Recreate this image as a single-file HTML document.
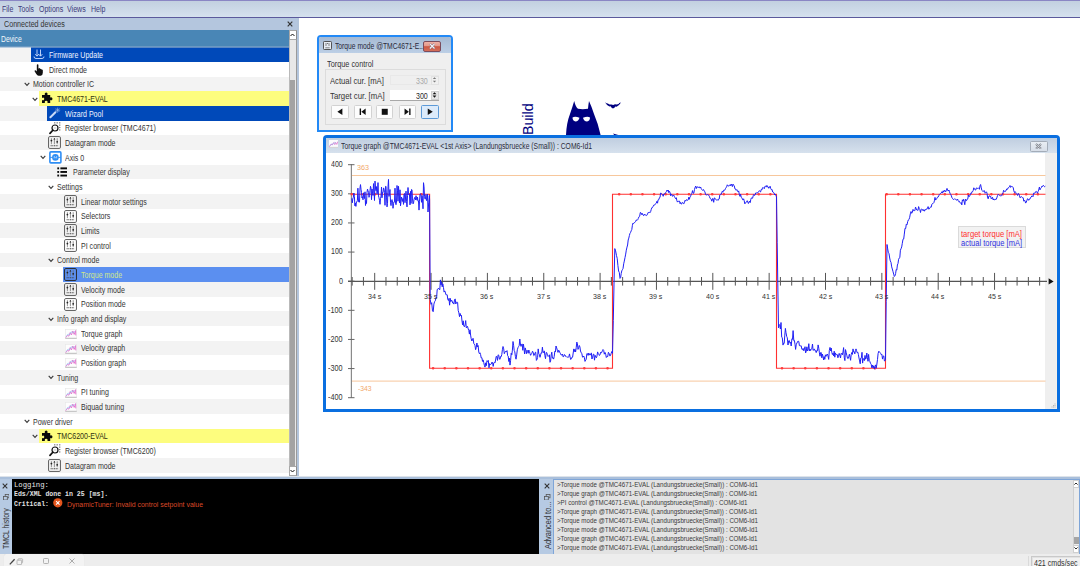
<!DOCTYPE html><html><head><meta charset="utf-8"><style>html,body{margin:0;padding:0;width:1080px;height:566px;overflow:hidden;background:#fff;position:relative;font-family:"Liberation Sans",sans-serif}</style></head><body><div style="position:absolute;left:0.00px;top:0.00px;width:1080.00px;height:18.00px;background:linear-gradient(#c1cfdf,#d6e2ef);"></div><div style="position:absolute;left:0.00px;top:0.00px;width:1080.00px;height:1.00px;background:#8a86c4;"></div><div style="position:absolute;left:0.00px;top:17.00px;width:1080.00px;height:1.00px;background:#5b5a9c;"></div><div style="position:absolute;left:1.70px;top:4.60px;font-family:'Liberation Sans', sans-serif;font-size:8.5px;line-height:8.5px;font-weight:normal;color:#3d3a7a;white-space:pre;transform:scaleX(0.8246);transform-origin:0 0;">File</div><div style="position:absolute;left:18.10px;top:4.60px;font-family:'Liberation Sans', sans-serif;font-size:8.5px;line-height:8.5px;font-weight:normal;color:#3d3a7a;white-space:pre;transform:scaleX(0.8013);transform-origin:0 0;">Tools</div><div style="position:absolute;left:38.50px;top:4.60px;font-family:'Liberation Sans', sans-serif;font-size:8.5px;line-height:8.5px;font-weight:normal;color:#3d3a7a;white-space:pre;transform:scaleX(0.8260);transform-origin:0 0;">Options</div><div style="position:absolute;left:67.20px;top:4.60px;font-family:'Liberation Sans', sans-serif;font-size:8.5px;line-height:8.5px;font-weight:normal;color:#3d3a7a;white-space:pre;transform:scaleX(0.8300);transform-origin:0 0;">Views</div><div style="position:absolute;left:90.50px;top:4.60px;font-family:'Liberation Sans', sans-serif;font-size:8.5px;line-height:8.5px;font-weight:normal;color:#3d3a7a;white-space:pre;transform:scaleX(0.8293);transform-origin:0 0;">Help</div><div style="position:absolute;left:0.00px;top:18.00px;width:297.00px;height:12.00px;background:#b4c6de;"></div><div style="position:absolute;left:4.00px;top:19.80px;font-family:'Liberation Sans', sans-serif;font-size:8.5px;line-height:8.5px;font-weight:normal;color:#333;white-space:pre;transform:scaleX(0.8410);transform-origin:0 0;">Connected devices</div><svg style="position:absolute;left:287.2px;top:20.5px" width="6" height="6" viewBox="0 0 6 6"><path d="M0.7 0.7L5.3 5.3M5.3 0.7L0.7 5.3" stroke="#333" stroke-width="1.2"/></svg><div style="position:absolute;left:0.00px;top:30.00px;width:288.50px;height:16.50px;background:#4986b6;"></div><div style="position:absolute;left:1.40px;top:34.80px;font-family:'Liberation Sans', sans-serif;font-size:8.5px;line-height:8.5px;font-weight:normal;color:#f2f6fa;white-space:pre;transform:scaleX(0.8005);transform-origin:0 0;">Device</div><div style="position:absolute;left:0.00px;top:47.20px;width:288.50px;height:14.68px;background:#f3f3f3;"></div><div style="position:absolute;left:31.00px;top:47.50px;width:257.50px;height:14.37px;background:#0049b9;"></div><svg style="position:absolute;left:33.0px;top:49.400000000000006px" width="12" height="11" viewBox="0 0 12 11"><path d="M4 0.5V7M2.2 5.2L4 7.2L5.8 5.2M7.5 0.5V7M5.7 5.2L7.5 7.2L9.3 5.2M1 7.5Q1 9.5 3 9.5H9Q11 9.5 11 7.5" stroke="#cfe0ff" stroke-width="0.9" fill="none"/></svg><div style="position:absolute;left:48.60px;top:50.92px;font-family:'Liberation Sans', sans-serif;font-size:8.6px;line-height:8.6px;font-weight:normal;color:#eef3ff;white-space:pre;transform:scaleX(0.8200);transform-origin:0 0;">Firmware Update</div><div style="position:absolute;left:0.00px;top:61.87px;width:288.50px;height:14.68px;background:#ffffff;"></div><svg style="position:absolute;left:33.6px;top:64.17px" width="10.6" height="12.4" viewBox="0 0 12 14"><path d="M3.2 1.2Q3.2 0.3 4.1 0.3Q5 0.3 5 1.2V6.2L5.3 4.9Q6.2 4.3 6.8 5.1L7 5.6Q7.9 5.1 8.5 5.9L8.6 6.4Q9.6 6.1 10 7V9.8Q10 12.6 7.6 13.4H5.2Q3.6 13.2 2.6 11.4L0.8 8.4Q0.3 7.4 1.2 7.1Q1.9 6.9 2.5 7.7L3.2 8.6Z" fill="#111"/></svg><div style="position:absolute;left:48.60px;top:65.59px;font-family:'Liberation Sans', sans-serif;font-size:8.6px;line-height:8.6px;font-weight:normal;color:#353535;white-space:pre;transform:scaleX(0.8200);transform-origin:0 0;">Direct mode</div><div style="position:absolute;left:0.00px;top:76.54px;width:288.50px;height:14.68px;background:#f3f3f3;"></div><svg style="position:absolute;left:24px;top:81.94px" width="6" height="5" viewBox="0 0 6 5"><path d="M0.7 0.9L3 3.3L5.3 0.9" stroke="#3a3a3a" stroke-width="1.15" fill="none"/></svg><div style="position:absolute;left:32.80px;top:80.26px;font-family:'Liberation Sans', sans-serif;font-size:8.6px;line-height:8.6px;font-weight:normal;color:#353535;white-space:pre;transform:scaleX(0.8200);transform-origin:0 0;">Motion controller IC</div><div style="position:absolute;left:0.00px;top:91.21px;width:288.50px;height:14.68px;background:#ffffff;"></div><div style="position:absolute;left:39.00px;top:91.21px;width:249.50px;height:14.67px;background:#fdfd7e;"></div><svg style="position:absolute;left:32px;top:96.61px" width="6" height="5" viewBox="0 0 6 5"><path d="M0.7 0.9L3 3.3L5.3 0.9" stroke="#3a3a3a" stroke-width="1.15" fill="none"/></svg><svg style="position:absolute;left:40.5px;top:92.41000000000001px" width="12" height="12" viewBox="0 0 12 12"><path d="M1 3H4Q3.2 1.8 4.1 0.9Q5.2 0.1 6.2 0.9Q7 1.8 6.3 3H9.2V5.6Q10.3 5 11.1 5.8Q11.9 6.9 11.1 7.9Q10.3 8.6 9.2 8V11H6.4Q7.1 9.9 6.2 9.1Q5.2 8.3 4.1 9.1Q3.3 9.9 4 11H1V8Q2.2 8.7 3 7.8Q3.6 6.9 3 5.9Q2.2 5.1 1 5.9Z" fill="#0a0a0a"/></svg><div style="position:absolute;left:56.60px;top:94.93px;font-family:'Liberation Sans', sans-serif;font-size:8.6px;line-height:8.6px;font-weight:normal;color:#303010;white-space:pre;transform:scaleX(0.8200);transform-origin:0 0;">TMC4671-EVAL</div><div style="position:absolute;left:0.00px;top:105.88px;width:288.50px;height:14.68px;background:#f3f3f3;"></div><div style="position:absolute;left:47.00px;top:106.18px;width:241.50px;height:14.37px;background:#0049b9;"></div><svg style="position:absolute;left:48.5px;top:107.08px" width="12" height="12" viewBox="0 0 12 12"><path d="M1.4 10.2L6.4 5.2" stroke="#c9daf8" stroke-width="2" stroke-linecap="round"/><path d="M8.6 0.6V5.8M6 3.2H11.2M6.8 1.4L10.4 5M10.4 1.4L6.8 5" stroke="#a9c2ef" stroke-width="0.55"/></svg><div style="position:absolute;left:64.60px;top:109.60px;font-family:'Liberation Sans', sans-serif;font-size:8.6px;line-height:8.6px;font-weight:normal;color:#eef3ff;white-space:pre;transform:scaleX(0.8200);transform-origin:0 0;">Wizard Pool</div><div style="position:absolute;left:0.00px;top:120.55px;width:288.50px;height:14.68px;background:#ffffff;"></div><svg style="position:absolute;left:48.5px;top:121.75px" width="14" height="13" viewBox="0 0 14 13"><g fill="#777"><rect x="5" y="0.3" width="1.4" height="1.1"/><rect x="7.5" y="0.3" width="1.4" height="1.1"/><rect x="10" y="0.3" width="1.4" height="1.1"/><rect x="10" y="2.6" width="1.4" height="1.1"/><rect x="10" y="5" width="1.4" height="1.1"/><rect x="10" y="7.4" width="1.4" height="1.1"/></g><circle cx="6" cy="6" r="3" stroke="#111" stroke-width="1.2" fill="#fff"/><path d="M3.8 8.2L1 11.4" stroke="#111" stroke-width="1.7" stroke-linecap="round"/><path d="M4.6 6H7.4" stroke="#aaa" stroke-width="0.7"/></svg><div style="position:absolute;left:64.60px;top:124.27px;font-family:'Liberation Sans', sans-serif;font-size:8.6px;line-height:8.6px;font-weight:normal;color:#353535;white-space:pre;transform:scaleX(0.8200);transform-origin:0 0;">Register browser (TMC4671)</div><div style="position:absolute;left:0.00px;top:135.22px;width:288.50px;height:14.68px;background:#f3f3f3;"></div><svg style="position:absolute;left:47.9px;top:136.42px" width="13" height="13" viewBox="0 0 13 13"><rect x="0.55" y="0.55" width="11.9" height="11.9" rx="1.3" stroke="#5e5e5e" stroke-width="1.0" fill="none"/><path d="M3.4 2.2V8.2M6.4 2V8.2M9.2 2.2V8.2" stroke="#666" stroke-width="0.7"/><circle cx="3.4" cy="4.6" r="0.9" fill="#222"/><path d="M5.4 3.4L6.4 1.9L7.4 3.4Z" fill="#222"/><circle cx="9.2" cy="5.8" r="0.9" fill="#222"/><path d="M2.6 9.7H10.1" stroke="#444" stroke-width="1.1" stroke-dasharray="1.1 0.6"/></svg><div style="position:absolute;left:64.60px;top:138.94px;font-family:'Liberation Sans', sans-serif;font-size:8.6px;line-height:8.6px;font-weight:normal;color:#353535;white-space:pre;transform:scaleX(0.8200);transform-origin:0 0;">Datagram mode</div><div style="position:absolute;left:0.00px;top:149.89px;width:288.50px;height:14.68px;background:#ffffff;"></div><svg style="position:absolute;left:40px;top:155.29px" width="6" height="5" viewBox="0 0 6 5"><path d="M0.7 0.9L3 3.3L5.3 0.9" stroke="#3a3a3a" stroke-width="1.15" fill="none"/></svg><svg style="position:absolute;left:48.5px;top:151.08999999999997px" width="13" height="13" viewBox="0 0 13 13"><rect x="0.9" y="0.9" width="11" height="11" rx="1" stroke="#2f8ef4" stroke-width="1.6" fill="#fff"/><path d="M1 6.4H12" stroke="#2f8ef4" stroke-width="0.9"/><circle cx="6.4" cy="6.4" r="3.3" fill="#2f8ef4"/><path d="M5.2 7.4V5.5L6.4 6.7L7.6 5.5V7.4" stroke="#e6f1ff" stroke-width="0.6" fill="none"/></svg><div style="position:absolute;left:64.60px;top:153.61px;font-family:'Liberation Sans', sans-serif;font-size:8.6px;line-height:8.6px;font-weight:normal;color:#353535;white-space:pre;transform:scaleX(0.8200);transform-origin:0 0;">Axis 0</div><div style="position:absolute;left:0.00px;top:164.56px;width:288.50px;height:14.68px;background:#f3f3f3;"></div><svg style="position:absolute;left:57.4px;top:166.76px" width="11" height="11" viewBox="0 0 11 11"><g fill="#0a0a0a"><rect x="0.3" y="0.4" width="1.8" height="1.9"/><rect x="3.4" y="0.4" width="6.6" height="1.9"/><rect x="0.3" y="4" width="1.8" height="1.9"/><rect x="3.4" y="4" width="6.6" height="1.9"/><rect x="0.3" y="7.6" width="1.8" height="1.9"/><rect x="3.4" y="7.6" width="6.6" height="1.9"/></g></svg><div style="position:absolute;left:72.60px;top:168.28px;font-family:'Liberation Sans', sans-serif;font-size:8.6px;line-height:8.6px;font-weight:normal;color:#353535;white-space:pre;transform:scaleX(0.8200);transform-origin:0 0;">Parameter display</div><div style="position:absolute;left:0.00px;top:179.23px;width:288.50px;height:14.68px;background:#ffffff;"></div><svg style="position:absolute;left:48px;top:184.63px" width="6" height="5" viewBox="0 0 6 5"><path d="M0.7 0.9L3 3.3L5.3 0.9" stroke="#3a3a3a" stroke-width="1.15" fill="none"/></svg><div style="position:absolute;left:56.80px;top:182.95px;font-family:'Liberation Sans', sans-serif;font-size:8.6px;line-height:8.6px;font-weight:normal;color:#353535;white-space:pre;transform:scaleX(0.8200);transform-origin:0 0;">Settings</div><div style="position:absolute;left:0.00px;top:193.90px;width:288.50px;height:14.68px;background:#f3f3f3;"></div><svg style="position:absolute;left:63.9px;top:195.09999999999997px" width="13" height="13" viewBox="0 0 13 13"><rect x="0.55" y="0.55" width="11.9" height="11.9" rx="1.3" stroke="#5e5e5e" stroke-width="1.0" fill="none"/><path d="M3.4 2.2V8.2M6.4 2V8.2M9.2 2.2V8.2" stroke="#666" stroke-width="0.7"/><circle cx="3.4" cy="4.6" r="0.9" fill="#222"/><path d="M5.4 3.4L6.4 1.9L7.4 3.4Z" fill="#222"/><circle cx="9.2" cy="5.8" r="0.9" fill="#222"/><path d="M2.6 9.7H10.1" stroke="#444" stroke-width="1.1" stroke-dasharray="1.1 0.6"/></svg><div style="position:absolute;left:80.60px;top:197.62px;font-family:'Liberation Sans', sans-serif;font-size:8.6px;line-height:8.6px;font-weight:normal;color:#353535;white-space:pre;transform:scaleX(0.8200);transform-origin:0 0;">Linear motor settings</div><div style="position:absolute;left:0.00px;top:208.57px;width:288.50px;height:14.68px;background:#ffffff;"></div><svg style="position:absolute;left:63.9px;top:209.76999999999998px" width="13" height="13" viewBox="0 0 13 13"><rect x="0.55" y="0.55" width="11.9" height="11.9" rx="1.3" stroke="#5e5e5e" stroke-width="1.0" fill="none"/><path d="M3.4 2.2V8.2M6.4 2V8.2M9.2 2.2V8.2" stroke="#666" stroke-width="0.7"/><circle cx="3.4" cy="4.6" r="0.9" fill="#222"/><path d="M5.4 3.4L6.4 1.9L7.4 3.4Z" fill="#222"/><circle cx="9.2" cy="5.8" r="0.9" fill="#222"/><path d="M2.6 9.7H10.1" stroke="#444" stroke-width="1.1" stroke-dasharray="1.1 0.6"/></svg><div style="position:absolute;left:80.60px;top:212.29px;font-family:'Liberation Sans', sans-serif;font-size:8.6px;line-height:8.6px;font-weight:normal;color:#353535;white-space:pre;transform:scaleX(0.8200);transform-origin:0 0;">Selectors</div><div style="position:absolute;left:0.00px;top:223.24px;width:288.50px;height:14.68px;background:#f3f3f3;"></div><svg style="position:absolute;left:63.9px;top:224.44px" width="13" height="13" viewBox="0 0 13 13"><rect x="0.55" y="0.55" width="11.9" height="11.9" rx="1.3" stroke="#5e5e5e" stroke-width="1.0" fill="none"/><path d="M3.4 2.2V8.2M6.4 2V8.2M9.2 2.2V8.2" stroke="#666" stroke-width="0.7"/><circle cx="3.4" cy="4.6" r="0.9" fill="#222"/><path d="M5.4 3.4L6.4 1.9L7.4 3.4Z" fill="#222"/><circle cx="9.2" cy="5.8" r="0.9" fill="#222"/><path d="M2.6 9.7H10.1" stroke="#444" stroke-width="1.1" stroke-dasharray="1.1 0.6"/></svg><div style="position:absolute;left:80.60px;top:226.96px;font-family:'Liberation Sans', sans-serif;font-size:8.6px;line-height:8.6px;font-weight:normal;color:#353535;white-space:pre;transform:scaleX(0.8200);transform-origin:0 0;">Limits</div><div style="position:absolute;left:0.00px;top:237.91px;width:288.50px;height:14.68px;background:#ffffff;"></div><svg style="position:absolute;left:63.9px;top:239.11px" width="13" height="13" viewBox="0 0 13 13"><rect x="0.55" y="0.55" width="11.9" height="11.9" rx="1.3" stroke="#5e5e5e" stroke-width="1.0" fill="none"/><path d="M3.4 2.2V8.2M6.4 2V8.2M9.2 2.2V8.2" stroke="#666" stroke-width="0.7"/><circle cx="3.4" cy="4.6" r="0.9" fill="#222"/><path d="M5.4 3.4L6.4 1.9L7.4 3.4Z" fill="#222"/><circle cx="9.2" cy="5.8" r="0.9" fill="#222"/><path d="M2.6 9.7H10.1" stroke="#444" stroke-width="1.1" stroke-dasharray="1.1 0.6"/></svg><div style="position:absolute;left:80.60px;top:241.63px;font-family:'Liberation Sans', sans-serif;font-size:8.6px;line-height:8.6px;font-weight:normal;color:#353535;white-space:pre;transform:scaleX(0.8200);transform-origin:0 0;">PI control</div><div style="position:absolute;left:0.00px;top:252.58px;width:288.50px;height:14.68px;background:#f3f3f3;"></div><svg style="position:absolute;left:48px;top:257.98px" width="6" height="5" viewBox="0 0 6 5"><path d="M0.7 0.9L3 3.3L5.3 0.9" stroke="#3a3a3a" stroke-width="1.15" fill="none"/></svg><div style="position:absolute;left:56.80px;top:256.30px;font-family:'Liberation Sans', sans-serif;font-size:8.6px;line-height:8.6px;font-weight:normal;color:#353535;white-space:pre;transform:scaleX(0.8200);transform-origin:0 0;">Control mode</div><div style="position:absolute;left:0.00px;top:267.25px;width:288.50px;height:14.68px;background:#ffffff;"></div><div style="position:absolute;left:62.50px;top:267.25px;width:226.00px;height:14.67px;background:#5b8ff0;"></div><svg style="position:absolute;left:63.9px;top:268.45px" width="13" height="13" viewBox="0 0 13 13"><rect x="0.55" y="0.55" width="11.9" height="11.9" rx="1.3" stroke="#2a2a2a" stroke-width="1.0" fill="none"/><path d="M3.4 2.2V8.2M6.4 2V8.2M9.2 2.2V8.2" stroke="#666" stroke-width="0.7"/><circle cx="3.4" cy="4.6" r="0.9" fill="#222"/><path d="M5.4 3.4L6.4 1.9L7.4 3.4Z" fill="#222"/><circle cx="9.2" cy="5.8" r="0.9" fill="#222"/><path d="M2.6 9.7H10.1" stroke="#444" stroke-width="1.1" stroke-dasharray="1.1 0.6"/></svg><div style="position:absolute;left:80.60px;top:270.97px;font-family:'Liberation Sans', sans-serif;font-size:8.6px;line-height:8.6px;font-weight:normal;color:#cfe68a;white-space:pre;transform:scaleX(0.8200);transform-origin:0 0;">Torque mode</div><div style="position:absolute;left:0.00px;top:281.92px;width:288.50px;height:14.68px;background:#f3f3f3;"></div><svg style="position:absolute;left:63.9px;top:283.12px" width="13" height="13" viewBox="0 0 13 13"><rect x="0.55" y="0.55" width="11.9" height="11.9" rx="1.3" stroke="#5e5e5e" stroke-width="1.0" fill="none"/><path d="M3.4 2.2V8.2M6.4 2V8.2M9.2 2.2V8.2" stroke="#666" stroke-width="0.7"/><circle cx="3.4" cy="4.6" r="0.9" fill="#222"/><path d="M5.4 3.4L6.4 1.9L7.4 3.4Z" fill="#222"/><circle cx="9.2" cy="5.8" r="0.9" fill="#222"/><path d="M2.6 9.7H10.1" stroke="#444" stroke-width="1.1" stroke-dasharray="1.1 0.6"/></svg><div style="position:absolute;left:80.60px;top:285.64px;font-family:'Liberation Sans', sans-serif;font-size:8.6px;line-height:8.6px;font-weight:normal;color:#353535;white-space:pre;transform:scaleX(0.8200);transform-origin:0 0;">Velocity mode</div><div style="position:absolute;left:0.00px;top:296.59px;width:288.50px;height:14.68px;background:#ffffff;"></div><svg style="position:absolute;left:63.9px;top:297.78999999999996px" width="13" height="13" viewBox="0 0 13 13"><rect x="0.55" y="0.55" width="11.9" height="11.9" rx="1.3" stroke="#5e5e5e" stroke-width="1.0" fill="none"/><path d="M3.4 2.2V8.2M6.4 2V8.2M9.2 2.2V8.2" stroke="#666" stroke-width="0.7"/><circle cx="3.4" cy="4.6" r="0.9" fill="#222"/><path d="M5.4 3.4L6.4 1.9L7.4 3.4Z" fill="#222"/><circle cx="9.2" cy="5.8" r="0.9" fill="#222"/><path d="M2.6 9.7H10.1" stroke="#444" stroke-width="1.1" stroke-dasharray="1.1 0.6"/></svg><div style="position:absolute;left:80.60px;top:300.31px;font-family:'Liberation Sans', sans-serif;font-size:8.6px;line-height:8.6px;font-weight:normal;color:#353535;white-space:pre;transform:scaleX(0.8200);transform-origin:0 0;">Position mode</div><div style="position:absolute;left:0.00px;top:311.26px;width:288.50px;height:14.68px;background:#f3f3f3;"></div><svg style="position:absolute;left:48px;top:316.66px" width="6" height="5" viewBox="0 0 6 5"><path d="M0.7 0.9L3 3.3L5.3 0.9" stroke="#3a3a3a" stroke-width="1.15" fill="none"/></svg><div style="position:absolute;left:56.80px;top:314.98px;font-family:'Liberation Sans', sans-serif;font-size:8.6px;line-height:8.6px;font-weight:normal;color:#353535;white-space:pre;transform:scaleX(0.8200);transform-origin:0 0;">Info graph and display</div><div style="position:absolute;left:0.00px;top:325.93px;width:288.50px;height:14.68px;background:#ffffff;"></div><svg style="position:absolute;left:65px;top:328.93px" width="12" height="10" viewBox="0 0 12 10"><rect x="0.3" y="0.3" width="11.4" height="9.2" fill="#fdfdfd" stroke="#e6e6e6" stroke-width="0.6"/><path d="M0.3 9.3H11.7" stroke="#bdbdbd" stroke-width="1"/><path d="M0.8 8.6L2.6 6.2L3.8 7.2L5.2 3.6L6.4 6L7.8 2L9.2 5.4L10.6 1.6L10.8 6.4" stroke="#e67ad2" stroke-width="1" fill="none"/><path d="M1.2 7.6L3 5L4.6 5.8L6 2.8L8 3.6L9.8 2.4" stroke="#8fc4f2" stroke-width="0.6" fill="none"/></svg><div style="position:absolute;left:80.60px;top:329.65px;font-family:'Liberation Sans', sans-serif;font-size:8.6px;line-height:8.6px;font-weight:normal;color:#353535;white-space:pre;transform:scaleX(0.8200);transform-origin:0 0;">Torque graph</div><div style="position:absolute;left:0.00px;top:340.60px;width:288.50px;height:14.68px;background:#f3f3f3;"></div><svg style="position:absolute;left:65px;top:343.59999999999997px" width="12" height="10" viewBox="0 0 12 10"><rect x="0.3" y="0.3" width="11.4" height="9.2" fill="#fdfdfd" stroke="#e6e6e6" stroke-width="0.6"/><path d="M0.3 9.3H11.7" stroke="#bdbdbd" stroke-width="1"/><path d="M0.8 8.6L2.6 6.2L3.8 7.2L5.2 3.6L6.4 6L7.8 2L9.2 5.4L10.6 1.6L10.8 6.4" stroke="#e67ad2" stroke-width="1" fill="none"/><path d="M1.2 7.6L3 5L4.6 5.8L6 2.8L8 3.6L9.8 2.4" stroke="#8fc4f2" stroke-width="0.6" fill="none"/></svg><div style="position:absolute;left:80.60px;top:344.32px;font-family:'Liberation Sans', sans-serif;font-size:8.6px;line-height:8.6px;font-weight:normal;color:#353535;white-space:pre;transform:scaleX(0.8200);transform-origin:0 0;">Velocity graph</div><div style="position:absolute;left:0.00px;top:355.27px;width:288.50px;height:14.68px;background:#ffffff;"></div><svg style="position:absolute;left:65px;top:358.27px" width="12" height="10" viewBox="0 0 12 10"><rect x="0.3" y="0.3" width="11.4" height="9.2" fill="#fdfdfd" stroke="#e6e6e6" stroke-width="0.6"/><path d="M0.3 9.3H11.7" stroke="#bdbdbd" stroke-width="1"/><path d="M0.8 8.6L2.6 6.2L3.8 7.2L5.2 3.6L6.4 6L7.8 2L9.2 5.4L10.6 1.6L10.8 6.4" stroke="#e67ad2" stroke-width="1" fill="none"/><path d="M1.2 7.6L3 5L4.6 5.8L6 2.8L8 3.6L9.8 2.4" stroke="#8fc4f2" stroke-width="0.6" fill="none"/></svg><div style="position:absolute;left:80.60px;top:358.99px;font-family:'Liberation Sans', sans-serif;font-size:8.6px;line-height:8.6px;font-weight:normal;color:#353535;white-space:pre;transform:scaleX(0.8200);transform-origin:0 0;">Position graph</div><div style="position:absolute;left:0.00px;top:369.94px;width:288.50px;height:14.68px;background:#f3f3f3;"></div><svg style="position:absolute;left:48px;top:375.34px" width="6" height="5" viewBox="0 0 6 5"><path d="M0.7 0.9L3 3.3L5.3 0.9" stroke="#3a3a3a" stroke-width="1.15" fill="none"/></svg><div style="position:absolute;left:56.80px;top:373.66px;font-family:'Liberation Sans', sans-serif;font-size:8.6px;line-height:8.6px;font-weight:normal;color:#353535;white-space:pre;transform:scaleX(0.8200);transform-origin:0 0;">Tuning</div><div style="position:absolute;left:0.00px;top:384.61px;width:288.50px;height:14.68px;background:#ffffff;"></div><svg style="position:absolute;left:65px;top:387.61px" width="12" height="10" viewBox="0 0 12 10"><rect x="0.3" y="0.3" width="11.4" height="9.2" fill="#fdfdfd" stroke="#e6e6e6" stroke-width="0.6"/><path d="M0.3 9.3H11.7" stroke="#bdbdbd" stroke-width="1"/><path d="M0.8 8.6L2.6 6.2L3.8 7.2L5.2 3.6L6.4 6L7.8 2L9.2 5.4L10.6 1.6L10.8 6.4" stroke="#e67ad2" stroke-width="1" fill="none"/><path d="M1.2 7.6L3 5L4.6 5.8L6 2.8L8 3.6L9.8 2.4" stroke="#8fc4f2" stroke-width="0.6" fill="none"/></svg><div style="position:absolute;left:80.60px;top:388.33px;font-family:'Liberation Sans', sans-serif;font-size:8.6px;line-height:8.6px;font-weight:normal;color:#353535;white-space:pre;transform:scaleX(0.8200);transform-origin:0 0;">PI tuning</div><div style="position:absolute;left:0.00px;top:399.28px;width:288.50px;height:14.68px;background:#f3f3f3;"></div><svg style="position:absolute;left:65px;top:402.28px" width="12" height="10" viewBox="0 0 12 10"><rect x="0.3" y="0.3" width="11.4" height="9.2" fill="#fdfdfd" stroke="#e6e6e6" stroke-width="0.6"/><path d="M0.3 9.3H11.7" stroke="#bdbdbd" stroke-width="1"/><path d="M0.8 8.6L2.6 6.2L3.8 7.2L5.2 3.6L6.4 6L7.8 2L9.2 5.4L10.6 1.6L10.8 6.4" stroke="#e67ad2" stroke-width="1" fill="none"/><path d="M1.2 7.6L3 5L4.6 5.8L6 2.8L8 3.6L9.8 2.4" stroke="#8fc4f2" stroke-width="0.6" fill="none"/></svg><div style="position:absolute;left:80.60px;top:403.00px;font-family:'Liberation Sans', sans-serif;font-size:8.6px;line-height:8.6px;font-weight:normal;color:#353535;white-space:pre;transform:scaleX(0.8200);transform-origin:0 0;">Biquad tuning</div><div style="position:absolute;left:0.00px;top:413.95px;width:288.50px;height:14.68px;background:#ffffff;"></div><svg style="position:absolute;left:24px;top:419.35px" width="6" height="5" viewBox="0 0 6 5"><path d="M0.7 0.9L3 3.3L5.3 0.9" stroke="#3a3a3a" stroke-width="1.15" fill="none"/></svg><div style="position:absolute;left:32.80px;top:417.67px;font-family:'Liberation Sans', sans-serif;font-size:8.6px;line-height:8.6px;font-weight:normal;color:#353535;white-space:pre;transform:scaleX(0.8200);transform-origin:0 0;">Power driver</div><div style="position:absolute;left:0.00px;top:428.62px;width:288.50px;height:14.68px;background:#f3f3f3;"></div><div style="position:absolute;left:39.00px;top:428.62px;width:249.50px;height:14.67px;background:#fdfd7e;"></div><svg style="position:absolute;left:32px;top:434.02px" width="6" height="5" viewBox="0 0 6 5"><path d="M0.7 0.9L3 3.3L5.3 0.9" stroke="#3a3a3a" stroke-width="1.15" fill="none"/></svg><svg style="position:absolute;left:40.5px;top:429.82px" width="12" height="12" viewBox="0 0 12 12"><path d="M1 3H4Q3.2 1.8 4.1 0.9Q5.2 0.1 6.2 0.9Q7 1.8 6.3 3H9.2V5.6Q10.3 5 11.1 5.8Q11.9 6.9 11.1 7.9Q10.3 8.6 9.2 8V11H6.4Q7.1 9.9 6.2 9.1Q5.2 8.3 4.1 9.1Q3.3 9.9 4 11H1V8Q2.2 8.7 3 7.8Q3.6 6.9 3 5.9Q2.2 5.1 1 5.9Z" fill="#0a0a0a"/></svg><div style="position:absolute;left:56.60px;top:432.34px;font-family:'Liberation Sans', sans-serif;font-size:8.6px;line-height:8.6px;font-weight:normal;color:#303010;white-space:pre;transform:scaleX(0.8200);transform-origin:0 0;">TMC6200-EVAL</div><div style="position:absolute;left:0.00px;top:443.29px;width:288.50px;height:14.68px;background:#ffffff;"></div><svg style="position:absolute;left:48.5px;top:444.48999999999995px" width="14" height="13" viewBox="0 0 14 13"><g fill="#777"><rect x="5" y="0.3" width="1.4" height="1.1"/><rect x="7.5" y="0.3" width="1.4" height="1.1"/><rect x="10" y="0.3" width="1.4" height="1.1"/><rect x="10" y="2.6" width="1.4" height="1.1"/><rect x="10" y="5" width="1.4" height="1.1"/><rect x="10" y="7.4" width="1.4" height="1.1"/></g><circle cx="6" cy="6" r="3" stroke="#111" stroke-width="1.2" fill="#fff"/><path d="M3.8 8.2L1 11.4" stroke="#111" stroke-width="1.7" stroke-linecap="round"/><path d="M4.6 6H7.4" stroke="#aaa" stroke-width="0.7"/></svg><div style="position:absolute;left:64.60px;top:447.01px;font-family:'Liberation Sans', sans-serif;font-size:8.6px;line-height:8.6px;font-weight:normal;color:#353535;white-space:pre;transform:scaleX(0.8200);transform-origin:0 0;">Register browser (TMC6200)</div><div style="position:absolute;left:0.00px;top:457.96px;width:288.50px;height:14.68px;background:#f3f3f3;"></div><svg style="position:absolute;left:47.9px;top:459.15999999999997px" width="13" height="13" viewBox="0 0 13 13"><rect x="0.55" y="0.55" width="11.9" height="11.9" rx="1.3" stroke="#5e5e5e" stroke-width="1.0" fill="none"/><path d="M3.4 2.2V8.2M6.4 2V8.2M9.2 2.2V8.2" stroke="#666" stroke-width="0.7"/><circle cx="3.4" cy="4.6" r="0.9" fill="#222"/><path d="M5.4 3.4L6.4 1.9L7.4 3.4Z" fill="#222"/><circle cx="9.2" cy="5.8" r="0.9" fill="#222"/><path d="M2.6 9.7H10.1" stroke="#444" stroke-width="1.1" stroke-dasharray="1.1 0.6"/></svg><div style="position:absolute;left:64.60px;top:461.68px;font-family:'Liberation Sans', sans-serif;font-size:8.6px;line-height:8.6px;font-weight:normal;color:#353535;white-space:pre;transform:scaleX(0.8200);transform-origin:0 0;">Datagram mode</div><div style="position:absolute;left:0.00px;top:46.00px;width:288.50px;height:1.00px;background:#6a98c1;"></div><div style="position:absolute;left:0.00px;top:47.00px;width:31.00px;height:1.00px;background:#b9cde0;"></div><div style="position:absolute;left:31.00px;top:47.00px;width:257.50px;height:1.00px;background:#5a88c4;"></div><div style="position:absolute;left:288.50px;top:30.00px;width:8.00px;height:446.00px;background:#e8e8e8;border-left:1px solid #b9b9b9;border-right:1px solid #9a9a9a;box-sizing:border-box;"></div><div style="position:absolute;left:288.50px;top:30.30px;width:8.00px;height:9.80px;background:#fff;border:1px solid #a8a8a8;border-right-color:#8c8c8c;box-sizing:border-box;"></div><svg style="position:absolute;left:290.3px;top:33px" width="5" height="4" viewBox="0 0 5 4"><path d="M0.5 3L2.5 1L4.5 3" stroke="#111" stroke-width="1" fill="none"/></svg><div style="position:absolute;left:290.30px;top:80.00px;width:5.00px;height:385.50px;background:#a3a3a3;"></div><div style="position:absolute;left:288.50px;top:466.30px;width:8.00px;height:9.80px;background:#fff;border:1px solid #a8a8a8;border-right-color:#8c8c8c;box-sizing:border-box;"></div><svg style="position:absolute;left:290.3px;top:469px" width="5" height="4" viewBox="0 0 5 4"><path d="M0.5 1L2.5 3L4.5 1" stroke="#111" stroke-width="1" fill="none"/></svg><div style="position:absolute;left:0.00px;top:472.63px;width:288.50px;height:3.37px;background:#fff;"></div><div style="position:absolute;left:296.50px;top:18.00px;width:2.60px;height:458.00px;background:#b3c5dc;"></div><div style="position:absolute;left:299.10px;top:18.00px;width:780.90px;height:458.00px;background:#fff;"></div><div style="position:absolute;left:520.5px;top:134.6px;width:32px;height:14px;transform:rotate(-90deg);transform-origin:0 0;font-family:'Liberation Sans',sans-serif;font-size:14.2px;line-height:14px;color:#000080;white-space:nowrap">Build</div><svg style="position:absolute;left:560px;top:98px" width="70" height="40" viewBox="0 0 70 40"><path d="M6 37Q6.5 25 10 16Q12.5 9 14.2 3.1Q15.8 9.5 18 10.8Q22.5 11.6 28 10.8Q28.4 6.5 29 3Q31.6 8.5 34 16Q38.3 26 40.6 37Z" fill="#000080"/><path d="M12.5 19.5Q15 18 19.5 19.8Q18.5 23.4 15.5 23.4Q12.6 23 12.5 19.5Z" fill="#fff"/><path d="M23 19.7Q27.5 17.8 30 19.4Q30 23 27 23.4Q23.8 23.2 23 19.7Z" fill="#fff"/><path d="M45 4.2Q46.5 7 49.5 8.6L50.6 8.2L51.6 9.8L53 10.6L54.4 9.8L55.4 8.4L56.6 8.8Q59.5 7.2 61 4.6L59.2 4.9L58.6 5.9L56.6 6.4L55 6.2L53.2 7L51.4 6.4L49.6 6.5L47.8 5.5L46.5 5.2Z" fill="#000080"/><path d="M53 35.5L60 37.5L55 38Z" fill="#000080"/></svg><div style="position:absolute;left:317.4px;top:35.2px;width:135.40px;height:97.20px;box-sizing:border-box;border:2.6px solid #2289f6;border-radius:4px 4px 0 0;background:#efefef;overflow:hidden"><div style="position:absolute;left:0;top:0;right:0;height:16.2px;background:linear-gradient(#a6bad3,#bccfe6)"></div></div><svg style="position:absolute;left:322.5px;top:41px" width="9" height="9" viewBox="0 0 9 9"><rect x="0.5" y="0.5" width="8" height="8" rx="0.8" stroke="#444" stroke-width="0.9" fill="#e6ecf3"/><path d="M2.3 6.8H6.7M3 2V5M6 2V5" stroke="#555" stroke-width="0.7"/><path d="M4.5 2L3.8 3H5.2Z" fill="#333"/></svg><div style="position:absolute;left:335.00px;top:42.49px;font-family:'Liberation Sans', sans-serif;font-size:8.4px;line-height:8.4px;font-weight:normal;color:#2a2a3a;white-space:pre;transform:scaleX(0.8035);transform-origin:0 0;">Torque mode @TMC4671-E..</div><div style="position:absolute;left:423px;top:41.4px;width:17.8px;height:10.3px;box-sizing:border-box;border:1px solid #7b4c5c;border-radius:2px;background:linear-gradient(#f0b0a4 0%,#e49a8c 42%,#cc5844 52%,#d46e5a 100%)"></div><svg style="position:absolute;left:428.7px;top:43.4px" width="6.4" height="6.4" viewBox="0 0 6.4 6.4"><path d="M0.9 0.9L5.5 5.5M5.5 0.9L0.9 5.5" stroke="#7d6a78" stroke-width="2.1"/><path d="M0.9 0.9L5.5 5.5M5.5 0.9L0.9 5.5" stroke="#f4f4f8" stroke-width="1.2"/></svg><div style="position:absolute;left:327.00px;top:59.57px;font-family:'Liberation Sans', sans-serif;font-size:8.3px;line-height:8.3px;font-weight:normal;color:#333;white-space:pre;transform:scaleX(0.8825);transform-origin:0 0;">Torque control</div><div style="position:absolute;left:324.50px;top:69.00px;width:121.00px;height:55.80px;border:1px solid #dcdcdc;box-sizing:border-box;"></div><div style="position:absolute;left:330.40px;top:76.89px;font-family:'Liberation Sans', sans-serif;font-size:8.4px;line-height:8.4px;font-weight:normal;color:#333;white-space:pre;transform:scaleX(0.9172);transform-origin:0 0;">Actual cur. [mA]</div><div style="position:absolute;left:330.40px;top:92.09px;font-family:'Liberation Sans', sans-serif;font-size:8.4px;line-height:8.4px;font-weight:normal;color:#333;white-space:pre;transform:scaleX(0.9308);transform-origin:0 0;">Target cur. [mA]</div><div style="position:absolute;left:389.60px;top:74.60px;width:49.20px;height:10.90px;background:#efefef;border:1px solid #e8e8e8;box-sizing:border-box;"></div><div style="position:absolute;left:415.90px;top:77.09px;font-family:'Liberation Sans', sans-serif;font-size:8.4px;line-height:8.4px;font-weight:normal;color:#a8a8a8;white-space:pre;transform:scaleX(0.8438);transform-origin:0 0;">330</div><div style="position:absolute;left:430.80px;top:75.60px;width:7.80px;height:9.00px;background:#f0f0f0;border:1px solid #e2e2e2;box-sizing:border-box;"></div><svg style="position:absolute;left:431.2px;top:76.4px" width="7" height="8" viewBox="0 0 7 8"><path d="M1.8 3L3.5 1.2L5.2 3Z M1.8 4.8L3.5 6.6L5.2 4.8Z" fill="#7a7a7a"/></svg><div style="position:absolute;left:389.60px;top:90.10px;width:49.20px;height:11.40px;background:#fff;border-bottom:1px solid #a8a8a8;box-sizing:border-box;"></div><div style="position:absolute;left:415.90px;top:91.79px;font-family:'Liberation Sans', sans-serif;font-size:8.4px;line-height:8.4px;font-weight:normal;color:#2a2a2a;white-space:pre;transform:scaleX(0.8438);transform-origin:0 0;">300</div><div style="position:absolute;left:430.80px;top:91.00px;width:7.80px;height:8.80px;background:#e6e6e6;border:1px solid #d0d0d0;box-sizing:border-box;"></div><svg style="position:absolute;left:431.2px;top:91.4px" width="7" height="8" viewBox="0 0 7 8"><path d="M1.6 3.3L3.5 1.2L5.4 3.3Z M1.6 4.6L3.5 6.7L5.4 4.6Z" fill="#111"/></svg><div style="position:absolute;left:331.30px;top:105.00px;width:17.30px;height:13.60px;background:#fdfdfd;border:1px solid #d2d2d2;box-sizing:border-box;border-radius:1.5px;"></div><svg style="position:absolute;left:0;top:0" width="1080" height="566"><path d="M342.35 108.6V115.0L337.35 111.8Z" fill="#111"/></svg><div style="position:absolute;left:353.60px;top:105.00px;width:18.10px;height:13.60px;background:#fdfdfd;border:1px solid #d2d2d2;box-sizing:border-box;border-radius:1.5px;"></div><svg style="position:absolute;left:0;top:0" width="1080" height="566"><path d="M359.65 108.6H361.04999999999995V115H359.65Z M365.65 108.6V115L361.34999999999997 111.8Z" fill="#111"/></svg><div style="position:absolute;left:376.20px;top:105.00px;width:17.10px;height:13.60px;background:#fdfdfd;border:1px solid #d2d2d2;box-sizing:border-box;border-radius:1.5px;"></div><svg style="position:absolute;left:0;top:0" width="1080" height="566"><rect x="381.75" y="108.8" width="6" height="6" fill="#111"/></svg><div style="position:absolute;left:398.70px;top:105.00px;width:17.70px;height:13.60px;background:#fdfdfd;border:1px solid #d2d2d2;box-sizing:border-box;border-radius:1.5px;"></div><svg style="position:absolute;left:0;top:0" width="1080" height="566"><path d="M410.54999999999995 108.6H409.15V115H410.54999999999995Z M404.54999999999995 108.6V115L408.84999999999997 111.8Z" fill="#111"/></svg><div style="position:absolute;left:421.00px;top:105.00px;width:17.90px;height:13.60px;background:#dcebfb;border:1px solid #5c9ad8;box-sizing:border-box;border-radius:1.5px;"></div><svg style="position:absolute;left:0;top:0" width="1080" height="566"><path d="M427.75 108.6V115L432.75 111.8Z" fill="#111"/></svg><div style="position:absolute;left:323.0px;top:134.8px;width:736.60px;height:276.90px;box-sizing:border-box;border:3px solid #0a6fe0;border-radius:4px 4px 0 0;background:#fff;overflow:hidden"><div style="position:absolute;left:0;top:0;right:0;height:15.4px;background:linear-gradient(#c0cee0,#d6e1ed)"></div><div style="position:absolute;right:0;top:15.4px;bottom:0;width:10.4px;background:#efefef;border-right:0.8px solid #f6f2ea"></div></div><svg style="position:absolute;left:329px;top:140px" width="9.2" height="8" viewBox="0 0 9.2 8"><rect x="0" y="0" width="9.2" height="7.8" fill="#fbfbfd"/><path d="M0 7.4H9.2" stroke="#c8c8c8" stroke-width="0.8"/><path d="M0.4 6.8L2 4.2L3.2 5L4.6 2.6L5.8 4.6L6.6 2.4L7.8 4.4L8.8 1.6" stroke="#e080d0" stroke-width="0.9" fill="none"/><path d="M1 6L2.6 3.8L4 4.4L5.4 2.2L7 3.2" stroke="#9ab8f0" stroke-width="0.6" fill="none"/></svg><div style="position:absolute;left:341.00px;top:141.57px;font-family:'Liberation Sans', sans-serif;font-size:8.3px;line-height:8.3px;font-weight:normal;color:#2c2c3c;white-space:pre;transform:scaleX(0.8169);transform-origin:0 0;">Torque graph @TMC4671-EVAL &lt;1st Axis&gt; (Landungsbruecke (Small)) : COM6-Id1</div><div style="position:absolute;left:1030px;top:141px;width:17.6px;height:10.5px;box-sizing:border-box;border:1px solid #a3acb8;border-radius:1.5px;background:linear-gradient(#e9eef4,#d7dee8)"></div><svg style="position:absolute;left:1035.4px;top:142.8px" width="7" height="6.6" viewBox="0 0 7 6.6"><path d="M1 1L6 5.6M6 1L1 5.6" stroke="#70757e" stroke-width="1.9"/><path d="M1 1L6 5.6M6 1L1 5.6" stroke="#f4f6f9" stroke-width="0.7"/></svg><svg style="position:absolute;left:0;top:0" width="1080" height="566"><path d="M351.5 175.5H1045.5M351.5 381.1H1045.5" stroke="#f7c79c" stroke-width="1"/><path d="M351.4 164.3V397.8" stroke="#8a8a8a" stroke-width="1.2"/><path d="M348 164.70H354.5" stroke="#666" stroke-width="1"/><path d="M348 193.82H354.5" stroke="#666" stroke-width="1"/><path d="M348 222.95H354.5" stroke="#666" stroke-width="1"/><path d="M348 252.07H354.5" stroke="#666" stroke-width="1"/><path d="M348 281.20H354.5" stroke="#666" stroke-width="1"/><path d="M348 310.32H354.5" stroke="#666" stroke-width="1"/><path d="M348 339.45H354.5" stroke="#666" stroke-width="1"/><path d="M348 368.57H354.5" stroke="#666" stroke-width="1"/><path d="M348 397.70H354.5" stroke="#666" stroke-width="1"/><path d="M348 281.4H1047" stroke="#555" stroke-width="1.1"/><path d="M1048.6 278.3V284.5L1053.6 281.4Z" fill="#111"/><path d="M352.16 277V285.6" stroke="#555" stroke-width="1"/><path d="M363.43 277V285.6" stroke="#555" stroke-width="1"/><path d="M374.70 272.9V289.8" stroke="#555" stroke-width="1"/><path d="M385.97 277V285.6" stroke="#555" stroke-width="1"/><path d="M397.24 277V285.6" stroke="#555" stroke-width="1"/><path d="M408.51 277V285.6" stroke="#555" stroke-width="1"/><path d="M419.78 277V285.6" stroke="#555" stroke-width="1"/><path d="M431.05 272.9V289.8" stroke="#555" stroke-width="1"/><path d="M442.32 277V285.6" stroke="#555" stroke-width="1"/><path d="M453.59 277V285.6" stroke="#555" stroke-width="1"/><path d="M464.86 277V285.6" stroke="#555" stroke-width="1"/><path d="M476.13 277V285.6" stroke="#555" stroke-width="1"/><path d="M487.40 272.9V289.8" stroke="#555" stroke-width="1"/><path d="M498.67 277V285.6" stroke="#555" stroke-width="1"/><path d="M509.94 277V285.6" stroke="#555" stroke-width="1"/><path d="M521.21 277V285.6" stroke="#555" stroke-width="1"/><path d="M532.48 277V285.6" stroke="#555" stroke-width="1"/><path d="M543.75 272.9V289.8" stroke="#555" stroke-width="1"/><path d="M555.02 277V285.6" stroke="#555" stroke-width="1"/><path d="M566.29 277V285.6" stroke="#555" stroke-width="1"/><path d="M577.56 277V285.6" stroke="#555" stroke-width="1"/><path d="M588.83 277V285.6" stroke="#555" stroke-width="1"/><path d="M600.10 272.9V289.8" stroke="#555" stroke-width="1"/><path d="M611.37 277V285.6" stroke="#555" stroke-width="1"/><path d="M622.64 277V285.6" stroke="#555" stroke-width="1"/><path d="M633.91 277V285.6" stroke="#555" stroke-width="1"/><path d="M645.18 277V285.6" stroke="#555" stroke-width="1"/><path d="M656.45 272.9V289.8" stroke="#555" stroke-width="1"/><path d="M667.72 277V285.6" stroke="#555" stroke-width="1"/><path d="M678.99 277V285.6" stroke="#555" stroke-width="1"/><path d="M690.26 277V285.6" stroke="#555" stroke-width="1"/><path d="M701.53 277V285.6" stroke="#555" stroke-width="1"/><path d="M712.80 272.9V289.8" stroke="#555" stroke-width="1"/><path d="M724.07 277V285.6" stroke="#555" stroke-width="1"/><path d="M735.34 277V285.6" stroke="#555" stroke-width="1"/><path d="M746.61 277V285.6" stroke="#555" stroke-width="1"/><path d="M757.88 277V285.6" stroke="#555" stroke-width="1"/><path d="M769.15 272.9V289.8" stroke="#555" stroke-width="1"/><path d="M780.42 277V285.6" stroke="#555" stroke-width="1"/><path d="M791.69 277V285.6" stroke="#555" stroke-width="1"/><path d="M802.96 277V285.6" stroke="#555" stroke-width="1"/><path d="M814.23 277V285.6" stroke="#555" stroke-width="1"/><path d="M825.50 272.9V289.8" stroke="#555" stroke-width="1"/><path d="M836.77 277V285.6" stroke="#555" stroke-width="1"/><path d="M848.04 277V285.6" stroke="#555" stroke-width="1"/><path d="M859.31 277V285.6" stroke="#555" stroke-width="1"/><path d="M870.58 277V285.6" stroke="#555" stroke-width="1"/><path d="M881.85 272.9V289.8" stroke="#555" stroke-width="1"/><path d="M893.12 277V285.6" stroke="#555" stroke-width="1"/><path d="M904.39 277V285.6" stroke="#555" stroke-width="1"/><path d="M915.66 277V285.6" stroke="#555" stroke-width="1"/><path d="M926.93 277V285.6" stroke="#555" stroke-width="1"/><path d="M938.20 272.9V289.8" stroke="#555" stroke-width="1"/><path d="M949.47 277V285.6" stroke="#555" stroke-width="1"/><path d="M960.74 277V285.6" stroke="#555" stroke-width="1"/><path d="M972.01 277V285.6" stroke="#555" stroke-width="1"/><path d="M983.28 277V285.6" stroke="#555" stroke-width="1"/><path d="M994.55 272.9V289.8" stroke="#555" stroke-width="1"/><path d="M1005.82 277V285.6" stroke="#555" stroke-width="1"/><path d="M1017.09 277V285.6" stroke="#555" stroke-width="1"/><path d="M1028.36 277V285.6" stroke="#555" stroke-width="1"/><path d="M1039.63 277V285.6" stroke="#555" stroke-width="1"/><path d="M351.6 194.2H429.6V368.2H612.5V194.2H776.5V368.2H885.5V194.2H1045.5" stroke="#ff3030" stroke-width="1.1" fill="none"/><path d="M350.40 194.2a1.3 1.3 0 1 0 2.6 0a1.3 1.3 0 1 0 -2.6 0M362.03 194.2a1.3 1.3 0 1 0 2.6 0a1.3 1.3 0 1 0 -2.6 0M373.66 194.2a1.3 1.3 0 1 0 2.6 0a1.3 1.3 0 1 0 -2.6 0M385.29 194.2a1.3 1.3 0 1 0 2.6 0a1.3 1.3 0 1 0 -2.6 0M396.92 194.2a1.3 1.3 0 1 0 2.6 0a1.3 1.3 0 1 0 -2.6 0M408.55 194.2a1.3 1.3 0 1 0 2.6 0a1.3 1.3 0 1 0 -2.6 0M420.18 194.2a1.3 1.3 0 1 0 2.6 0a1.3 1.3 0 1 0 -2.6 0M431.81 368.2a1.3 1.3 0 1 0 2.6 0a1.3 1.3 0 1 0 -2.6 0M443.44 368.2a1.3 1.3 0 1 0 2.6 0a1.3 1.3 0 1 0 -2.6 0M455.07 368.2a1.3 1.3 0 1 0 2.6 0a1.3 1.3 0 1 0 -2.6 0M466.70 368.2a1.3 1.3 0 1 0 2.6 0a1.3 1.3 0 1 0 -2.6 0M478.33 368.2a1.3 1.3 0 1 0 2.6 0a1.3 1.3 0 1 0 -2.6 0M489.96 368.2a1.3 1.3 0 1 0 2.6 0a1.3 1.3 0 1 0 -2.6 0M501.59 368.2a1.3 1.3 0 1 0 2.6 0a1.3 1.3 0 1 0 -2.6 0M513.22 368.2a1.3 1.3 0 1 0 2.6 0a1.3 1.3 0 1 0 -2.6 0M524.85 368.2a1.3 1.3 0 1 0 2.6 0a1.3 1.3 0 1 0 -2.6 0M536.48 368.2a1.3 1.3 0 1 0 2.6 0a1.3 1.3 0 1 0 -2.6 0M548.11 368.2a1.3 1.3 0 1 0 2.6 0a1.3 1.3 0 1 0 -2.6 0M559.74 368.2a1.3 1.3 0 1 0 2.6 0a1.3 1.3 0 1 0 -2.6 0M571.37 368.2a1.3 1.3 0 1 0 2.6 0a1.3 1.3 0 1 0 -2.6 0M583.00 368.2a1.3 1.3 0 1 0 2.6 0a1.3 1.3 0 1 0 -2.6 0M594.63 368.2a1.3 1.3 0 1 0 2.6 0a1.3 1.3 0 1 0 -2.6 0M606.26 368.2a1.3 1.3 0 1 0 2.6 0a1.3 1.3 0 1 0 -2.6 0M617.89 194.2a1.3 1.3 0 1 0 2.6 0a1.3 1.3 0 1 0 -2.6 0M629.52 194.2a1.3 1.3 0 1 0 2.6 0a1.3 1.3 0 1 0 -2.6 0M641.15 194.2a1.3 1.3 0 1 0 2.6 0a1.3 1.3 0 1 0 -2.6 0M652.78 194.2a1.3 1.3 0 1 0 2.6 0a1.3 1.3 0 1 0 -2.6 0M664.41 194.2a1.3 1.3 0 1 0 2.6 0a1.3 1.3 0 1 0 -2.6 0M676.04 194.2a1.3 1.3 0 1 0 2.6 0a1.3 1.3 0 1 0 -2.6 0M687.67 194.2a1.3 1.3 0 1 0 2.6 0a1.3 1.3 0 1 0 -2.6 0M699.30 194.2a1.3 1.3 0 1 0 2.6 0a1.3 1.3 0 1 0 -2.6 0M710.93 194.2a1.3 1.3 0 1 0 2.6 0a1.3 1.3 0 1 0 -2.6 0M722.56 194.2a1.3 1.3 0 1 0 2.6 0a1.3 1.3 0 1 0 -2.6 0M734.19 194.2a1.3 1.3 0 1 0 2.6 0a1.3 1.3 0 1 0 -2.6 0M745.82 194.2a1.3 1.3 0 1 0 2.6 0a1.3 1.3 0 1 0 -2.6 0M757.45 194.2a1.3 1.3 0 1 0 2.6 0a1.3 1.3 0 1 0 -2.6 0M769.08 194.2a1.3 1.3 0 1 0 2.6 0a1.3 1.3 0 1 0 -2.6 0M780.71 368.2a1.3 1.3 0 1 0 2.6 0a1.3 1.3 0 1 0 -2.6 0M792.34 368.2a1.3 1.3 0 1 0 2.6 0a1.3 1.3 0 1 0 -2.6 0M803.97 368.2a1.3 1.3 0 1 0 2.6 0a1.3 1.3 0 1 0 -2.6 0M815.60 368.2a1.3 1.3 0 1 0 2.6 0a1.3 1.3 0 1 0 -2.6 0M827.23 368.2a1.3 1.3 0 1 0 2.6 0a1.3 1.3 0 1 0 -2.6 0M838.86 368.2a1.3 1.3 0 1 0 2.6 0a1.3 1.3 0 1 0 -2.6 0M850.49 368.2a1.3 1.3 0 1 0 2.6 0a1.3 1.3 0 1 0 -2.6 0M862.12 368.2a1.3 1.3 0 1 0 2.6 0a1.3 1.3 0 1 0 -2.6 0M873.75 368.2a1.3 1.3 0 1 0 2.6 0a1.3 1.3 0 1 0 -2.6 0M885.38 194.2a1.3 1.3 0 1 0 2.6 0a1.3 1.3 0 1 0 -2.6 0M897.01 194.2a1.3 1.3 0 1 0 2.6 0a1.3 1.3 0 1 0 -2.6 0M908.64 194.2a1.3 1.3 0 1 0 2.6 0a1.3 1.3 0 1 0 -2.6 0M920.27 194.2a1.3 1.3 0 1 0 2.6 0a1.3 1.3 0 1 0 -2.6 0M931.90 194.2a1.3 1.3 0 1 0 2.6 0a1.3 1.3 0 1 0 -2.6 0M943.53 194.2a1.3 1.3 0 1 0 2.6 0a1.3 1.3 0 1 0 -2.6 0M955.16 194.2a1.3 1.3 0 1 0 2.6 0a1.3 1.3 0 1 0 -2.6 0M966.79 194.2a1.3 1.3 0 1 0 2.6 0a1.3 1.3 0 1 0 -2.6 0M978.42 194.2a1.3 1.3 0 1 0 2.6 0a1.3 1.3 0 1 0 -2.6 0M990.05 194.2a1.3 1.3 0 1 0 2.6 0a1.3 1.3 0 1 0 -2.6 0M1001.68 194.2a1.3 1.3 0 1 0 2.6 0a1.3 1.3 0 1 0 -2.6 0M1013.31 194.2a1.3 1.3 0 1 0 2.6 0a1.3 1.3 0 1 0 -2.6 0M1024.94 194.2a1.3 1.3 0 1 0 2.6 0a1.3 1.3 0 1 0 -2.6 0M1036.57 194.2a1.3 1.3 0 1 0 2.6 0a1.3 1.3 0 1 0 -2.6 0" fill="#ff3a3a"/><path d="M351.8 198.4 L352.3 202.8 L352.8 198.9 L353.3 197.4 L353.9 193.1 L354.4 196.7 L354.9 205.8 L355.4 203.2 L355.9 206.4 L356.4 202.0 L356.9 201.9 L357.4 200.4 L357.9 188.2 L358.5 201.8 L359.0 202.2 L359.5 202.1 L360.0 188.0 L360.5 184.6 L361.0 189.2 L361.5 192.6 L362.0 198.0 L362.5 196.7 L363.0 199.8 L363.5 192.8 L364.0 197.3 L364.5 198.5 L365.0 191.8 L365.5 205.5 L366.0 200.6 L366.5 203.5 L367.0 192.3 L367.5 189.1 L368.0 190.8 L368.5 192.4 L369.0 197.3 L369.5 195.6 L370.0 190.6 L370.5 186.3 L371.0 188.2 L371.5 199.7 L372.0 189.0 L372.5 193.5 L373.0 195.5 L373.5 183.6 L374.0 191.0 L374.5 200.5 L375.0 181.1 L375.5 188.0 L376.0 190.7 L376.5 186.6 L377.0 194.2 L377.5 192.1 L378.0 182.6 L378.5 195.9 L379.0 197.8 L379.5 200.3 L380.0 204.3 L380.5 198.6 L381.0 196.2 L381.5 187.0 L382.0 197.8 L382.5 192.4 L383.0 192.7 L383.5 187.9 L384.0 189.2 L384.5 192.6 L385.0 205.3 L385.5 186.4 L386.0 186.3 L386.5 197.1 L387.0 206.9 L387.5 203.4 L388.0 186.7 L388.5 179.4 L389.0 196.4 L389.5 192.7 L390.0 189.5 L390.5 202.3 L391.0 205.6 L391.5 200.2 L392.0 199.6 L392.5 200.7 L393.0 208.3 L393.5 203.6 L394.0 201.9 L394.5 201.8 L395.0 188.2 L395.5 203.7 L396.0 204.7 L396.5 202.1 L397.0 185.5 L397.5 190.8 L398.0 201.2 L398.5 186.3 L399.0 193.7 L399.5 202.9 L400.0 189.8 L400.5 205.8 L401.0 202.2 L401.5 197.0 L402.0 199.0 L402.5 201.4 L403.0 198.5 L403.5 204.4 L404.0 194.0 L404.5 193.5 L405.0 202.7 L405.5 198.0 L406.0 191.2 L406.5 201.6 L407.0 206.9 L407.5 195.7 L408.0 187.5 L408.5 193.8 L409.0 194.9 L409.5 194.2 L410.0 204.9 L410.5 191.4 L411.0 203.4 L411.5 189.5 L412.0 189.8 L412.5 198.9 L413.0 203.9 L413.5 203.2 L414.0 199.7 L414.5 197.7 L415.0 197.3 L415.5 200.0 L416.0 195.7 L416.5 197.8 L417.0 200.2 L417.5 197.0 L418.0 201.3 L418.5 200.9 L419.0 210.1 L419.5 201.2 L420.0 194.6 L420.5 193.7 L421.0 195.8 L421.5 202.3 L422.0 195.5 L422.5 198.8 L423.0 208.8 L423.5 182.7 L424.0 186.7 L424.5 196.3 L425.0 199.2 L425.5 198.8 L426.0 194.5 L426.5 200.6 L427.0 199.5 L427.5 194.1 L428.0 212.0 L428.7 202.8 L429.4 195.5 L429.6 199.8 L430.2 299.4 L431.0 304.3 L431.7 302.7 L432.5 310.9 L433.2 311.7 L433.9 304.1 L434.6 301.7 L435.3 300.8 L436.0 297.6 L436.6 298.0 L437.2 289.5 L437.9 289.2 L438.5 288.2 L439.1 289.2 L439.8 289.7 L440.4 279.9 L441.0 284.9 L441.6 281.9 L442.2 286.8 L442.8 283.9 L443.5 287.7 L444.1 292.1 L444.7 290.9 L445.3 292.1 L445.9 294.7 L446.5 294.7 L447.2 294.8 L447.8 299.5 L448.4 300.5 L449.0 298.4 L449.6 305.2 L450.2 298.3 L450.8 301.6 L451.5 300.1 L452.1 301.0 L452.7 303.0 L453.3 302.8 L453.9 304.1 L454.5 299.8 L455.2 298.9 L455.8 304.0 L456.4 302.2 L457.0 301.9 L457.6 302.4 L458.2 310.4 L458.9 312.9 L459.5 316.7 L460.1 313.4 L460.8 316.0 L461.4 315.3 L462.0 321.0 L462.6 324.9 L463.2 320.8 L463.8 326.0 L464.5 326.8 L465.1 324.8 L465.7 320.6 L466.3 327.9 L466.9 327.1 L467.5 326.3 L468.2 329.0 L468.8 330.4 L469.4 334.1 L470.0 329.7 L470.6 335.1 L471.2 338.7 L471.9 341.0 L472.5 339.0 L473.1 338.3 L473.8 343.5 L474.4 344.1 L475.0 345.6 L475.6 349.7 L476.2 347.7 L476.9 343.0 L477.5 347.0 L478.1 345.5 L478.8 352.1 L479.4 353.7 L480.0 352.8 L480.6 354.6 L481.2 357.9 L481.9 357.7 L482.5 361.4 L483.1 359.9 L483.8 362.7 L484.4 365.4 L485.0 367.1 L485.7 362.8 L486.3 365.7 L487.0 360.7 L487.7 361.6 L488.3 360.4 L489.0 367.8 L489.6 363.6 L490.2 364.8 L490.8 364.2 L491.4 363.9 L492.0 362.0 L492.6 362.9 L493.2 366.4 L493.8 362.8 L494.4 362.4 L495.0 362.9 L495.6 360.0 L496.2 356.4 L496.9 356.7 L497.5 360.4 L498.1 354.8 L498.8 355.3 L499.4 359.0 L500.0 359.4 L500.6 356.5 L501.2 356.7 L501.8 354.4 L502.4 349.7 L503.0 346.5 L503.7 348.8 L504.3 353.7 L505.0 352.1 L505.7 351.2 L506.3 351.8 L507.0 350.6 L507.6 355.6 L508.2 356.1 L508.8 361.5 L509.4 358.1 L510.0 365.1 L510.6 360.4 L511.2 353.2 L511.8 354.8 L512.4 350.2 L513.0 341.5 L513.6 345.3 L514.2 350.6 L514.8 351.8 L515.4 356.5 L516.0 359.2 L516.7 354.9 L517.3 349.8 L518.0 347.6 L518.6 346.5 L519.2 345.5 L519.8 339.0 L520.4 344.0 L521.0 346.4 L521.6 344.3 L522.2 344.0 L522.8 350.3 L523.4 344.1 L524.0 348.2 L524.6 354.0 L525.2 347.9 L525.8 350.1 L526.4 353.7 L527.0 350.2 L527.6 351.5 L528.2 353.3 L528.8 350.0 L529.4 351.6 L530.0 353.5 L530.6 355.3 L531.3 353.9 L531.9 353.2 L532.5 351.2 L533.2 352.3 L533.8 355.7 L534.5 355.0 L535.1 352.6 L535.7 352.1 L536.4 360.4 L537.0 359.4 L537.6 357.4 L538.2 348.9 L538.8 353.7 L539.4 354.5 L540.0 357.3 L540.6 354.9 L541.2 352.7 L541.8 353.2 L542.4 347.2 L543.0 352.2 L543.6 352.8 L544.3 350.9 L544.9 355.7 L545.5 358.7 L546.2 352.4 L546.8 352.7 L547.5 355.5 L548.1 356.5 L548.7 355.9 L549.4 354.8 L550.0 362.3 L550.6 361.1 L551.2 354.9 L551.8 352.2 L552.4 358.1 L553.0 357.7 L553.6 359.1 L554.2 356.6 L554.8 351.4 L555.4 352.0 L556.0 346.0 L556.7 347.9 L557.3 350.2 L558.0 352.4 L558.7 350.2 L559.3 351.1 L560.0 352.9 L560.6 353.8 L561.2 355.1 L561.9 354.9 L562.5 354.0 L563.1 356.9 L563.8 356.4 L564.4 354.6 L565.0 355.0 L565.6 356.4 L566.3 356.6 L566.9 357.2 L567.5 357.1 L568.2 357.4 L568.8 356.8 L569.5 353.9 L570.1 357.1 L570.7 359.5 L571.4 358.8 L572.0 357.1 L572.6 357.1 L573.2 353.0 L573.8 348.9 L574.4 351.6 L575.0 349.4 L575.6 352.0 L576.2 347.7 L576.8 342.1 L577.4 343.4 L578.0 349.4 L578.6 347.7 L579.3 345.5 L579.9 346.9 L580.5 351.0 L581.2 352.8 L581.8 353.3 L582.5 357.1 L583.1 357.1 L583.7 356.0 L584.4 357.7 L585.0 361.4 L585.6 360.0 L586.2 359.3 L586.9 353.6 L587.5 353.7 L588.1 355.4 L588.8 353.0 L589.4 355.1 L590.0 354.2 L590.6 355.1 L591.3 352.9 L591.9 359.0 L592.5 357.9 L593.2 354.3 L593.8 354.1 L594.5 360.2 L595.1 355.3 L595.7 356.9 L596.4 357.8 L597.0 355.9 L597.6 351.9 L598.2 353.5 L598.8 354.0 L599.4 355.5 L600.0 354.7 L600.6 352.3 L601.2 353.1 L601.8 352.2 L602.4 350.7 L603.0 349.5 L603.7 350.4 L604.3 354.2 L605.0 352.4 L605.7 354.2 L606.3 357.5 L607.0 356.3 L607.7 356.7 L608.4 352.3 L609.1 353.3 L609.7 355.8 L610.4 355.7 L611.1 353.5 L611.8 351.5 L612.5 353.3 L613.3 320.7 L614.0 284.1 L614.8 248.6 L615.6 250.9 L616.5 255.6 L617.2 258.3 L617.9 265.4 L618.6 271.0 L619.3 272.5 L620.0 278.4 L620.6 277.8 L621.2 273.5 L621.8 270.8 L622.4 269.7 L623.0 268.6 L623.7 263.8 L624.3 261.1 L625.0 257.6 L625.7 254.1 L626.3 250.2 L627.0 247.1 L627.6 245.0 L628.2 240.0 L628.8 238.1 L629.4 235.5 L630.0 233.3 L630.6 232.4 L631.2 230.8 L631.8 229.5 L632.4 225.3 L633.0 223.0 L633.7 223.5 L634.3 222.9 L635.0 222.0 L635.7 221.4 L636.3 219.9 L637.0 220.5 L637.7 219.8 L638.3 218.4 L639.0 216.7 L639.7 216.2 L640.3 212.5 L641.0 212.8 L641.7 214.6 L642.3 213.4 L643.0 215.1 L643.7 215.7 L644.3 214.2 L645.0 215.2 L645.6 214.9 L646.2 215.4 L646.9 215.3 L647.5 214.2 L648.1 212.5 L648.8 212.5 L649.4 212.3 L650.0 212.8 L650.6 211.7 L651.2 209.6 L651.9 207.6 L652.5 207.5 L653.1 206.4 L653.8 205.1 L654.4 205.2 L655.0 204.2 L655.6 203.8 L656.2 203.3 L656.9 201.3 L657.5 203.2 L658.1 199.8 L658.8 199.7 L659.4 197.7 L660.0 197.5 L660.6 193.1 L661.3 193.3 L661.9 194.2 L662.5 194.5 L663.2 196.3 L663.8 194.0 L664.5 194.1 L665.1 193.1 L665.7 192.7 L666.4 191.6 L667.0 190.1 L667.6 191.2 L668.2 190.0 L668.8 192.7 L669.5 191.3 L670.1 192.7 L670.7 195.8 L671.3 194.3 L671.9 194.5 L672.5 196.3 L673.2 195.8 L673.8 195.1 L674.4 196.5 L675.0 197.7 L675.6 198.7 L676.3 197.7 L676.9 200.8 L677.5 202.1 L678.2 201.0 L678.8 201.4 L679.5 201.1 L680.1 203.7 L680.7 202.4 L681.4 204.1 L682.0 203.6 L682.6 202.4 L683.2 203.3 L683.8 203.9 L684.5 202.1 L685.1 200.3 L685.7 201.1 L686.3 199.9 L686.9 199.5 L687.5 200.4 L688.2 199.8 L688.8 197.2 L689.4 199.3 L690.0 196.8 L690.6 196.4 L691.3 193.9 L691.9 193.4 L692.5 190.6 L693.2 193.4 L693.8 193.2 L694.5 189.4 L695.1 187.4 L695.7 186.1 L696.4 188.5 L697.0 186.6 L697.6 187.1 L698.2 187.2 L698.8 187.6 L699.4 186.8 L700.0 188.1 L700.6 187.0 L701.2 188.5 L701.8 189.6 L702.4 190.3 L703.0 189.9 L703.6 189.6 L704.3 191.3 L704.9 191.6 L705.5 194.6 L706.2 195.1 L706.8 194.7 L707.5 194.6 L708.1 194.8 L708.7 195.1 L709.4 196.4 L710.0 198.1 L710.6 198.8 L711.2 199.2 L711.8 201.2 L712.5 198.6 L713.1 198.8 L713.7 202.3 L714.3 197.9 L714.9 198.2 L715.5 199.3 L716.2 199.7 L716.8 200.2 L717.4 199.7 L718.0 200.4 L718.6 199.2 L719.2 199.0 L719.8 195.0 L720.5 194.4 L721.1 194.5 L721.7 192.6 L722.3 191.3 L722.9 192.3 L723.5 190.3 L724.2 190.5 L724.8 190.1 L725.4 188.7 L726.0 187.8 L726.6 186.8 L727.3 184.8 L727.9 185.7 L728.5 186.3 L729.2 185.1 L729.8 185.1 L730.5 185.9 L731.1 184.0 L731.7 185.1 L732.4 186.6 L733.0 184.1 L733.6 185.2 L734.3 185.9 L734.9 188.8 L735.5 188.9 L736.2 190.3 L736.8 189.6 L737.5 190.9 L738.1 191.9 L738.7 190.9 L739.4 195.1 L740.0 196.4 L740.6 194.2 L741.2 197.2 L741.8 197.7 L742.4 199.1 L743.0 200.1 L743.6 198.8 L744.2 200.6 L744.8 203.8 L745.4 202.9 L746.0 202.7 L746.6 201.4 L747.2 200.7 L747.8 202.0 L748.4 203.5 L749.0 202.1 L749.6 201.0 L750.2 202.6 L750.8 199.4 L751.4 197.9 L752.0 198.4 L752.6 198.2 L753.2 195.8 L753.8 194.5 L754.4 195.4 L755.0 195.2 L755.6 193.0 L756.2 193.2 L756.9 192.5 L757.5 193.0 L758.1 192.1 L758.8 191.5 L759.4 190.6 L760.0 191.6 L760.6 191.9 L761.2 189.5 L761.9 189.9 L762.5 187.7 L763.1 187.6 L763.8 188.0 L764.4 188.6 L765.0 186.2 L765.6 186.3 L766.3 186.9 L766.9 185.4 L767.5 187.0 L768.2 186.9 L768.8 188.3 L769.5 187.2 L770.1 186.2 L770.7 188.5 L771.4 189.7 L772.0 189.4 L772.7 192.0 L773.3 192.3 L774.0 192.8 L774.7 195.0 L775.3 194.1 L776.0 195.7 L776.5 196.9 L777.2 242.8 L777.8 283.9 L778.5 328.0 L779.1 324.4 L779.8 325.4 L780.4 329.0 L781.0 322.5 L781.7 337.1 L782.3 337.8 L783.0 345.1 L783.6 343.1 L784.2 343.4 L784.8 335.1 L785.4 328.4 L786.0 332.7 L786.7 336.4 L787.3 337.8 L788.0 345.0 L788.7 340.8 L789.3 340.5 L790.0 343.2 L790.6 342.3 L791.2 346.0 L791.9 338.8 L792.5 339.3 L793.1 330.6 L793.8 340.7 L794.4 340.4 L795.0 344.3 L795.6 349.4 L796.2 344.8 L796.9 343.0 L797.5 342.0 L798.1 341.0 L798.8 341.5 L799.4 345.7 L800.0 345.4 L800.6 345.9 L801.2 345.8 L801.9 349.4 L802.5 349.7 L803.1 348.4 L803.8 350.8 L804.4 349.5 L805.0 346.7 L805.6 352.9 L806.2 351.6 L806.9 346.8 L807.5 351.0 L808.1 349.9 L808.8 343.7 L809.4 350.9 L810.0 349.0 L810.6 350.6 L811.2 349.3 L811.9 348.2 L812.5 344.0 L813.1 350.4 L813.8 349.8 L814.4 348.9 L815.0 350.8 L815.6 350.7 L816.2 352.6 L816.9 350.3 L817.5 350.8 L818.1 344.9 L818.8 348.3 L819.4 352.8 L820.0 356.2 L820.6 352.6 L821.2 352.5 L821.8 357.8 L822.4 354.0 L823.0 356.3 L823.6 360.0 L824.2 356.6 L824.8 359.3 L825.4 354.8 L826.0 356.4 L826.7 354.7 L827.3 354.0 L828.0 355.9 L828.7 359.4 L829.3 350.6 L830.0 347.4 L830.6 350.9 L831.2 348.0 L831.8 352.3 L832.4 354.5 L833.0 353.2 L833.6 355.9 L834.2 351.2 L834.8 357.2 L835.4 352.9 L836.0 354.7 L836.6 354.6 L837.3 354.6 L837.9 357.8 L838.5 355.9 L839.2 353.4 L839.8 355.0 L840.5 358.0 L841.1 353.7 L841.7 353.0 L842.4 354.8 L843.0 352.0 L843.6 347.6 L844.3 357.8 L844.9 360.6 L845.5 349.6 L846.2 352.5 L846.8 355.3 L847.5 358.2 L848.1 358.7 L848.7 356.6 L849.4 354.2 L850.0 357.4 L850.6 360.3 L851.2 354.5 L851.8 352.5 L852.4 354.4 L853.0 348.9 L853.6 351.8 L854.2 351.7 L854.8 353.9 L855.4 350.7 L856.0 348.9 L856.6 350.7 L857.2 352.8 L857.8 352.2 L858.4 354.6 L859.0 358.0 L859.6 360.9 L860.2 363.8 L860.8 358.0 L861.4 357.8 L862.0 352.3 L862.6 363.1 L863.2 358.5 L863.8 359.0 L864.4 360.6 L865.0 355.4 L865.6 359.1 L866.2 358.6 L866.8 353.0 L867.4 357.4 L868.0 361.3 L868.6 354.4 L869.3 360.8 L869.9 361.6 L870.5 363.3 L871.2 364.3 L871.8 367.8 L872.5 365.0 L873.1 368.0 L873.7 365.8 L874.4 369.1 L875.0 366.2 L875.6 364.9 L876.2 368.3 L876.9 364.0 L877.5 359.4 L878.1 353.5 L878.8 351.2 L879.4 351.8 L880.0 352.6 L880.6 353.3 L881.2 354.7 L881.9 354.3 L882.5 359.1 L883.1 356.3 L883.8 355.9 L884.4 360.9 L885.0 360.8 L885.5 359.7 L886.2 301.7 L887.0 244.5 L887.7 248.9 L888.3 252.3 L889.0 253.7 L889.7 258.0 L890.3 260.9 L891.0 262.4 L891.7 266.9 L892.3 269.0 L893.0 271.6 L893.7 274.1 L894.3 276.5 L895.0 275.7 L895.6 273.6 L896.2 269.5 L896.8 270.1 L897.4 265.0 L898.0 263.5 L898.6 259.3 L899.2 258.1 L899.8 257.7 L900.4 250.2 L901.0 248.8 L901.7 246.9 L902.3 243.3 L903.0 239.2 L903.7 239.0 L904.3 234.1 L905.0 228.3 L905.7 228.5 L906.3 224.1 L907.0 224.8 L907.7 221.6 L908.3 220.0 L909.0 219.5 L909.7 217.3 L910.3 213.9 L911.0 211.5 L911.7 213.3 L912.3 212.4 L913.0 209.4 L913.6 210.7 L914.2 210.6 L914.9 210.6 L915.5 207.1 L916.1 208.3 L916.8 210.0 L917.4 210.2 L918.0 210.4 L918.6 206.6 L919.3 208.6 L919.9 209.7 L920.5 212.5 L921.2 209.3 L921.8 209.1 L922.5 209.5 L923.1 210.8 L923.7 209.6 L924.4 211.2 L925.0 209.5 L925.6 209.9 L926.2 208.9 L926.9 209.3 L927.5 208.2 L928.1 206.6 L928.8 209.2 L929.4 208.8 L930.0 207.5 L930.6 207.1 L931.2 207.2 L931.9 204.2 L932.5 203.6 L933.1 203.5 L933.8 202.8 L934.4 200.8 L935.0 197.4 L935.6 200.1 L936.2 199.4 L936.9 198.3 L937.5 197.2 L938.1 197.1 L938.8 195.8 L939.4 194.3 L940.0 193.7 L940.6 193.4 L941.3 192.9 L941.9 191.7 L942.5 193.1 L943.2 190.8 L943.8 192.1 L944.5 190.1 L945.1 190.7 L945.7 191.8 L946.4 190.3 L947.0 188.4 L947.6 189.9 L948.2 191.1 L948.9 190.0 L949.5 191.7 L950.1 193.8 L950.8 194.4 L951.4 195.9 L952.0 197.8 L952.6 198.6 L953.2 199.4 L953.8 199.5 L954.5 198.8 L955.1 199.3 L955.7 199.4 L956.3 199.8 L956.9 200.3 L957.5 199.0 L958.2 200.6 L958.8 201.7 L959.4 201.3 L960.0 202.6 L960.6 203.3 L961.2 202.6 L961.8 204.9 L962.4 199.8 L963.0 201.0 L963.6 199.3 L964.2 202.0 L964.8 204.7 L965.4 199.2 L966.0 200.6 L966.6 200.6 L967.2 199.0 L967.8 198.9 L968.4 194.9 L969.0 196.8 L969.6 196.1 L970.2 194.9 L970.8 193.2 L971.4 193.5 L972.0 191.6 L972.6 191.7 L973.2 190.5 L973.8 187.8 L974.5 189.3 L975.1 189.7 L975.7 190.1 L976.3 188.0 L976.9 188.0 L977.5 188.5 L978.2 187.8 L978.8 188.5 L979.4 189.3 L980.0 185.8 L980.6 184.5 L981.3 187.9 L981.9 190.4 L982.5 190.9 L983.2 191.6 L983.8 190.6 L984.5 190.8 L985.1 193.3 L985.7 192.5 L986.4 191.8 L987.0 193.1 L987.6 197.8 L988.2 198.8 L988.8 196.2 L989.5 195.7 L990.1 196.9 L990.7 196.4 L991.3 199.0 L991.9 198.4 L992.5 197.3 L993.2 200.0 L993.8 198.9 L994.4 199.8 L995.0 200.0 L995.6 199.2 L996.2 199.4 L996.8 197.9 L997.5 195.7 L998.1 194.3 L998.7 194.7 L999.3 195.1 L999.9 195.8 L1000.5 195.8 L1001.2 196.0 L1001.8 195.3 L1002.4 193.6 L1003.0 192.9 L1003.6 190.3 L1004.3 191.3 L1004.9 191.8 L1005.5 191.4 L1006.2 190.0 L1006.8 188.9 L1007.5 189.3 L1008.1 187.8 L1008.7 187.6 L1009.4 186.8 L1010.0 185.5 L1010.6 187.4 L1011.3 186.3 L1011.9 186.7 L1012.5 186.8 L1013.2 187.4 L1013.8 190.8 L1014.5 192.6 L1015.1 191.6 L1015.7 192.5 L1016.4 193.9 L1017.0 194.5 L1017.6 195.5 L1018.2 193.3 L1018.8 193.8 L1019.5 195.7 L1020.1 197.9 L1020.7 197.3 L1021.3 196.5 L1021.9 197.3 L1022.5 197.6 L1023.2 197.8 L1023.8 201.2 L1024.4 200.1 L1025.0 200.9 L1025.6 203.1 L1026.2 202.3 L1026.8 200.7 L1027.5 198.7 L1028.1 199.1 L1028.7 200.3 L1029.3 199.1 L1029.9 199.2 L1030.5 197.5 L1031.2 197.2 L1031.8 195.9 L1032.4 196.0 L1033.0 196.7 L1033.6 193.2 L1034.3 193.3 L1034.9 193.2 L1035.5 191.8 L1036.2 191.3 L1036.8 192.0 L1037.5 193.2 L1038.1 191.4 L1038.7 190.1 L1039.4 187.0 L1040.0 189.8 L1040.7 188.4 L1041.3 187.7 L1042.0 186.0 L1042.7 186.5 L1043.3 185.3 L1044.0 186.2 L1044.6 186.7 L1045.3 186.2" stroke="#1f1ff5" stroke-width="1.0" fill="none" stroke-linejoin="round"/></svg><div style="position:absolute;left:330.90px;top:161.06px;font-family:'Liberation Sans', sans-serif;font-size:8.2px;line-height:8.2px;font-weight:normal;color:#333;white-space:pre;transform:scaleX(0.8558);transform-origin:0 0;">400</div><div style="position:absolute;left:330.90px;top:190.18px;font-family:'Liberation Sans', sans-serif;font-size:8.2px;line-height:8.2px;font-weight:normal;color:#333;white-space:pre;transform:scaleX(0.8558);transform-origin:0 0;">300</div><div style="position:absolute;left:330.90px;top:219.31px;font-family:'Liberation Sans', sans-serif;font-size:8.2px;line-height:8.2px;font-weight:normal;color:#333;white-space:pre;transform:scaleX(0.8558);transform-origin:0 0;">200</div><div style="position:absolute;left:330.90px;top:248.43px;font-family:'Liberation Sans', sans-serif;font-size:8.2px;line-height:8.2px;font-weight:normal;color:#333;white-space:pre;transform:scaleX(0.8558);transform-origin:0 0;">100</div><div style="position:absolute;left:338.60px;top:277.56px;font-family:'Liberation Sans', sans-serif;font-size:8.2px;line-height:8.2px;font-weight:normal;color:#333;white-space:pre;transform:scaleX(0.8767);transform-origin:0 0;">0</div><div style="position:absolute;left:328.10px;top:306.68px;font-family:'Liberation Sans', sans-serif;font-size:8.2px;line-height:8.2px;font-weight:normal;color:#333;white-space:pre;transform:scaleX(0.8847);transform-origin:0 0;">-100</div><div style="position:absolute;left:328.10px;top:335.81px;font-family:'Liberation Sans', sans-serif;font-size:8.2px;line-height:8.2px;font-weight:normal;color:#333;white-space:pre;transform:scaleX(0.8847);transform-origin:0 0;">-200</div><div style="position:absolute;left:328.10px;top:364.93px;font-family:'Liberation Sans', sans-serif;font-size:8.2px;line-height:8.2px;font-weight:normal;color:#333;white-space:pre;transform:scaleX(0.8847);transform-origin:0 0;">-300</div><div style="position:absolute;left:328.10px;top:394.06px;font-family:'Liberation Sans', sans-serif;font-size:8.2px;line-height:8.2px;font-weight:normal;color:#333;white-space:pre;transform:scaleX(0.8847);transform-origin:0 0;">-400</div><div style="position:absolute;left:357.00px;top:164.23px;font-family:'Liberation Sans', sans-serif;font-size:8.0px;line-height:8.0px;font-weight:normal;color:#f2a868;white-space:pre;transform:scaleX(0.8982);transform-origin:0 0;">363</div><div style="position:absolute;left:357.50px;top:385.23px;font-family:'Liberation Sans', sans-serif;font-size:8.0px;line-height:8.0px;font-weight:normal;color:#f2a868;white-space:pre;transform:scaleX(0.8429);transform-origin:0 0;">-343</div><div style="position:absolute;left:367.70px;top:293.03px;font-family:'Liberation Sans', sans-serif;font-size:8.0px;line-height:8.0px;font-weight:normal;color:#333;white-space:pre;transform:scaleX(0.8860);transform-origin:0 0;">34 s</div><div style="position:absolute;left:424.05px;top:293.03px;font-family:'Liberation Sans', sans-serif;font-size:8.0px;line-height:8.0px;font-weight:normal;color:#333;white-space:pre;transform:scaleX(0.8860);transform-origin:0 0;">35 s</div><div style="position:absolute;left:480.40px;top:293.03px;font-family:'Liberation Sans', sans-serif;font-size:8.0px;line-height:8.0px;font-weight:normal;color:#333;white-space:pre;transform:scaleX(0.8860);transform-origin:0 0;">36 s</div><div style="position:absolute;left:536.75px;top:293.03px;font-family:'Liberation Sans', sans-serif;font-size:8.0px;line-height:8.0px;font-weight:normal;color:#333;white-space:pre;transform:scaleX(0.8860);transform-origin:0 0;">37 s</div><div style="position:absolute;left:593.10px;top:293.03px;font-family:'Liberation Sans', sans-serif;font-size:8.0px;line-height:8.0px;font-weight:normal;color:#333;white-space:pre;transform:scaleX(0.8860);transform-origin:0 0;">38 s</div><div style="position:absolute;left:649.45px;top:293.03px;font-family:'Liberation Sans', sans-serif;font-size:8.0px;line-height:8.0px;font-weight:normal;color:#333;white-space:pre;transform:scaleX(0.8860);transform-origin:0 0;">39 s</div><div style="position:absolute;left:705.80px;top:293.03px;font-family:'Liberation Sans', sans-serif;font-size:8.0px;line-height:8.0px;font-weight:normal;color:#333;white-space:pre;transform:scaleX(0.8860);transform-origin:0 0;">40 s</div><div style="position:absolute;left:762.15px;top:293.03px;font-family:'Liberation Sans', sans-serif;font-size:8.0px;line-height:8.0px;font-weight:normal;color:#333;white-space:pre;transform:scaleX(0.8860);transform-origin:0 0;">41 s</div><div style="position:absolute;left:818.50px;top:293.03px;font-family:'Liberation Sans', sans-serif;font-size:8.0px;line-height:8.0px;font-weight:normal;color:#333;white-space:pre;transform:scaleX(0.8860);transform-origin:0 0;">42 s</div><div style="position:absolute;left:874.85px;top:293.03px;font-family:'Liberation Sans', sans-serif;font-size:8.0px;line-height:8.0px;font-weight:normal;color:#333;white-space:pre;transform:scaleX(0.8860);transform-origin:0 0;">43 s</div><div style="position:absolute;left:931.20px;top:293.03px;font-family:'Liberation Sans', sans-serif;font-size:8.0px;line-height:8.0px;font-weight:normal;color:#333;white-space:pre;transform:scaleX(0.8860);transform-origin:0 0;">44 s</div><div style="position:absolute;left:987.55px;top:293.03px;font-family:'Liberation Sans', sans-serif;font-size:8.0px;line-height:8.0px;font-weight:normal;color:#333;white-space:pre;transform:scaleX(0.8860);transform-origin:0 0;">45 s</div><div style="position:absolute;left:957.70px;top:226.20px;width:68.30px;height:22.20px;background:#f2f2f2;border:1px solid #dadada;box-sizing:border-box;"></div><div style="position:absolute;left:961.00px;top:231.26px;font-family:'Liberation Sans', sans-serif;font-size:8.2px;line-height:8.2px;font-weight:normal;color:#ff3030;white-space:pre;transform:scaleX(0.9306);transform-origin:0 0;">target torque [mA]</div><div style="position:absolute;left:961.00px;top:240.06px;font-family:'Liberation Sans', sans-serif;font-size:8.2px;line-height:8.2px;font-weight:normal;color:#3030e0;white-space:pre;transform:scaleX(0.9179);transform-origin:0 0;">actual torque [mA]</div><svg style="position:absolute;left:1051px;top:403px" width="5" height="5" viewBox="0 0 5 5"><g fill="#b5b5b5"><rect x="3.5" y="0.5" width="1" height="1"/><rect x="2" y="2" width="1" height="1"/><rect x="3.5" y="2" width="1" height="1"/><rect x="0.5" y="3.5" width="1" height="1"/><rect x="2" y="3.5" width="1" height="1"/><rect x="3.5" y="3.5" width="1" height="1"/></g></svg><div style="position:absolute;left:0.00px;top:476.00px;width:1080.00px;height:1.00px;background:#dde3ea;"></div><div style="position:absolute;left:0.00px;top:477.00px;width:1080.00px;height:1.80px;background:#a9bfdb;"></div><div style="position:absolute;left:0.00px;top:478.70px;width:11.60px;height:75.20px;background:#b6cae3;"></div><div style="position:absolute;left:11.60px;top:478.70px;width:527.30px;height:75.20px;background:#000;"></div><svg style="position:absolute;left:2.3px;top:482.6px" width="6" height="6" viewBox="0 0 6 6"><path d="M0.7 0.7L5.3 5.3M5.3 0.7L0.7 5.3" stroke="#333" stroke-width="1.1"/></svg><svg style="position:absolute;left:2.6px;top:493.8px" width="6.5" height="6.5" viewBox="0 0 6.5 6.5"><rect x="2.2" y="0.5" width="3.8" height="3.3" stroke="#555" stroke-width="0.8" fill="none"/><rect x="0.5" y="2.5" width="3.8" height="3.5" stroke="#555" stroke-width="0.8" fill="#b6cae3"/></svg><div style="position:absolute;left:0;top:549px;width:44px;height:10px;transform:rotate(-90deg);transform-origin:0 0"></div><div style="position:absolute;left:1.50px;top:548.80px;font-family:'Liberation Sans',sans-serif;font-size:8.6px;line-height:8.6px;color:#333;white-space:pre;transform:rotate(-90deg) scaleX(0.8034);transform-origin:0 0">TMCL history</div><div style="position:absolute;left:14.00px;top:482.02px;font-family:'Liberation Mono', monospace;font-size:7.3px;line-height:7.3px;font-weight:normal;color:#e6e6e6;white-space:pre;transform:scaleX(0.9991);transform-origin:0 0;">Logging:</div><div style="position:absolute;left:14.00px;top:491.12px;font-family:'Liberation Mono', monospace;font-size:7.3px;line-height:7.3px;font-weight:bold;color:#e0e0e0;white-space:pre;transform:scaleX(0.8973);transform-origin:0 0;">Eds/XML done in 25 [ms].</div><div style="position:absolute;left:14.00px;top:501.02px;font-family:'Liberation Mono', monospace;font-size:7.3px;line-height:7.3px;font-weight:bold;color:#e0e0e0;white-space:pre;transform:scaleX(0.8878);transform-origin:0 0;">Critical:</div><svg style="position:absolute;left:53.4px;top:498px" width="9.6" height="9.6" viewBox="0 0 10 10"><circle cx="5" cy="5" r="4.8" fill="#e4551c"/><path d="M3.2 3.2L6.8 6.8M6.8 3.2L3.2 6.8" stroke="#fff" stroke-width="1.1"/></svg><div style="position:absolute;left:66.70px;top:501.17px;font-family:'Liberation Sans', sans-serif;font-size:7.6px;line-height:7.6px;font-weight:normal;color:#dc4a28;white-space:pre;transform:scaleX(0.9119);transform-origin:0 0;">DynamicTuner: Invalid control setpoint value</div><div style="position:absolute;left:538.90px;top:478.70px;width:14.00px;height:75.20px;background:#b6cae3;"></div><svg style="position:absolute;left:544px;top:482.6px" width="6" height="6" viewBox="0 0 6 6"><path d="M0.7 0.7L5.3 5.3M5.3 0.7L0.7 5.3" stroke="#333" stroke-width="1.1"/></svg><svg style="position:absolute;left:544.3px;top:493.8px" width="6.5" height="6.5" viewBox="0 0 6.5 6.5"><rect x="2.2" y="0.5" width="3.8" height="3.3" stroke="#555" stroke-width="0.8" fill="none"/><rect x="0.5" y="2.5" width="3.8" height="3.5" stroke="#555" stroke-width="0.8" fill="#b6cae3"/></svg><div style="position:absolute;left:544.00px;top:549.00px;font-family:'Liberation Sans',sans-serif;font-size:8.6px;line-height:8.6px;color:#333;white-space:pre;transform:rotate(-90deg) scaleX(0.8644);transform-origin:0 0">Advanced to...</div><div style="position:absolute;left:552.90px;top:478.70px;width:527.10px;height:75.90px;background:#e3e3e3;border:1px solid #7ea5d8;border-right:1px solid #7ea5d8;box-sizing:border-box;"></div><div style="position:absolute;left:557.00px;top:480.77px;font-family:'Liberation Sans', sans-serif;font-size:7.6px;line-height:7.6px;font-weight:normal;color:#3a3a3a;white-space:pre;transform:scaleX(0.8172);transform-origin:0 0;">&gt;Torque mode @TMC4671-EVAL (Landungsbruecke(Small)) : COM6-Id1</div><div style="position:absolute;left:557.00px;top:489.77px;font-family:'Liberation Sans', sans-serif;font-size:7.6px;line-height:7.6px;font-weight:normal;color:#3a3a3a;white-space:pre;transform:scaleX(0.8137);transform-origin:0 0;">&gt;Torque graph @TMC4671-EVAL (Landungsbruecke(Small)) : COM6-Id1</div><div style="position:absolute;left:557.00px;top:498.77px;font-family:'Liberation Sans', sans-serif;font-size:7.6px;line-height:7.6px;font-weight:normal;color:#3a3a3a;white-space:pre;transform:scaleX(0.8151);transform-origin:0 0;">&gt;PI control @TMC4671-EVAL (Landungsbruecke(Small)) : COM6-Id1</div><div style="position:absolute;left:557.00px;top:507.77px;font-family:'Liberation Sans', sans-serif;font-size:7.6px;line-height:7.6px;font-weight:normal;color:#3a3a3a;white-space:pre;transform:scaleX(0.8137);transform-origin:0 0;">&gt;Torque graph @TMC4671-EVAL (Landungsbruecke(Small)) : COM6-Id1</div><div style="position:absolute;left:557.00px;top:516.77px;font-family:'Liberation Sans', sans-serif;font-size:7.6px;line-height:7.6px;font-weight:normal;color:#3a3a3a;white-space:pre;transform:scaleX(0.8172);transform-origin:0 0;">&gt;Torque mode @TMC4671-EVAL (Landungsbruecke(Small)) : COM6-Id1</div><div style="position:absolute;left:557.00px;top:525.77px;font-family:'Liberation Sans', sans-serif;font-size:7.6px;line-height:7.6px;font-weight:normal;color:#3a3a3a;white-space:pre;transform:scaleX(0.8172);transform-origin:0 0;">&gt;Torque mode @TMC4671-EVAL (Landungsbruecke(Small)) : COM6-Id1</div><div style="position:absolute;left:557.00px;top:534.77px;font-family:'Liberation Sans', sans-serif;font-size:7.6px;line-height:7.6px;font-weight:normal;color:#3a3a3a;white-space:pre;transform:scaleX(0.8137);transform-origin:0 0;">&gt;Torque graph @TMC4671-EVAL (Landungsbruecke(Small)) : COM6-Id1</div><div style="position:absolute;left:557.00px;top:543.77px;font-family:'Liberation Sans', sans-serif;font-size:7.6px;line-height:7.6px;font-weight:normal;color:#3a3a3a;white-space:pre;transform:scaleX(0.8172);transform-origin:0 0;">&gt;Torque mode @TMC4671-EVAL (Landungsbruecke(Small)) : COM6-Id1</div><div style="position:absolute;left:1072.60px;top:479.50px;width:6.60px;height:73.50px;background:#ececec;border-left:1px solid #d0d0d0;box-sizing:border-box;"></div><div style="position:absolute;left:1073.00px;top:479.70px;width:6.00px;height:8.60px;background:#fff;border:1px solid #cfcfcf;box-sizing:border-box;"></div><svg style="position:absolute;left:1074px;top:482px" width="4" height="3" viewBox="0 0 4 3"><path d="M0.4 2.6L2 1L3.6 2.6" stroke="#111" stroke-width="0.9" fill="none"/></svg><div style="position:absolute;left:1073.60px;top:537.00px;width:5.00px;height:7.00px;background:#a5a5a5;"></div><div style="position:absolute;left:1073.00px;top:544.60px;width:6.00px;height:8.40px;background:#fff;border:1px solid #cfcfcf;box-sizing:border-box;"></div><svg style="position:absolute;left:1074px;top:547.4px" width="4" height="3" viewBox="0 0 4 3"><path d="M0.4 0.4L2 2L3.6 0.4" stroke="#111" stroke-width="0.9" fill="none"/></svg><div style="position:absolute;left:0.00px;top:553.90px;width:1080.00px;height:12.10px;background:#ededed;"></div><div style="position:absolute;left:4.20px;top:554.40px;width:79.60px;height:12.00px;background:#f3f3f3;border-radius:2.5px 2.5px 0 0;box-shadow:0 0 0.8px #d0d0d0;"></div><svg style="position:absolute;left:8.5px;top:558.3px" width="16" height="7" viewBox="0 0 16 7"><path d="M0.8 6.4L5.6 1.2" stroke="#444" stroke-width="1.3"/><rect x="9" y="0.8" width="4.6" height="4" rx="0.6" stroke="#aaa" stroke-width="0.8" fill="none"/><rect x="8" y="2.2" width="4.6" height="4.4" rx="0.6" stroke="#aaa" stroke-width="0.8" fill="#f3f3f3"/></svg><svg style="position:absolute;left:43px;top:558.4px" width="6" height="6" viewBox="0 0 6 6"><rect x="0.5" y="0.5" width="5" height="5" rx="0.8" stroke="#aaa" stroke-width="0.9" fill="none"/></svg><svg style="position:absolute;left:68.8px;top:558.4px" width="6" height="6" viewBox="0 0 6 6"><path d="M0.5 0.5L5.5 5.5M5.5 0.5L0.5 5.5" stroke="#999" stroke-width="0.8"/></svg><div style="position:absolute;left:1028.30px;top:555.50px;width:0.80px;height:10.50px;background:#dadada;"></div><div style="position:absolute;left:1031.00px;top:556.00px;width:49.00px;height:10.00px;background:#f1f1f1;border:1px solid #c9c9c9;border-right:none;border-bottom:none;box-shadow:inset 1px 1px 0 #e2e2e2;box-sizing:border-box;"></div><div style="position:absolute;left:1033.60px;top:558.92px;font-family:'Liberation Sans', sans-serif;font-size:8.6px;line-height:8.6px;font-weight:normal;color:#333;white-space:pre;transform:scaleX(0.8222);transform-origin:0 0;">421 cmds/sec</div></body></html>
